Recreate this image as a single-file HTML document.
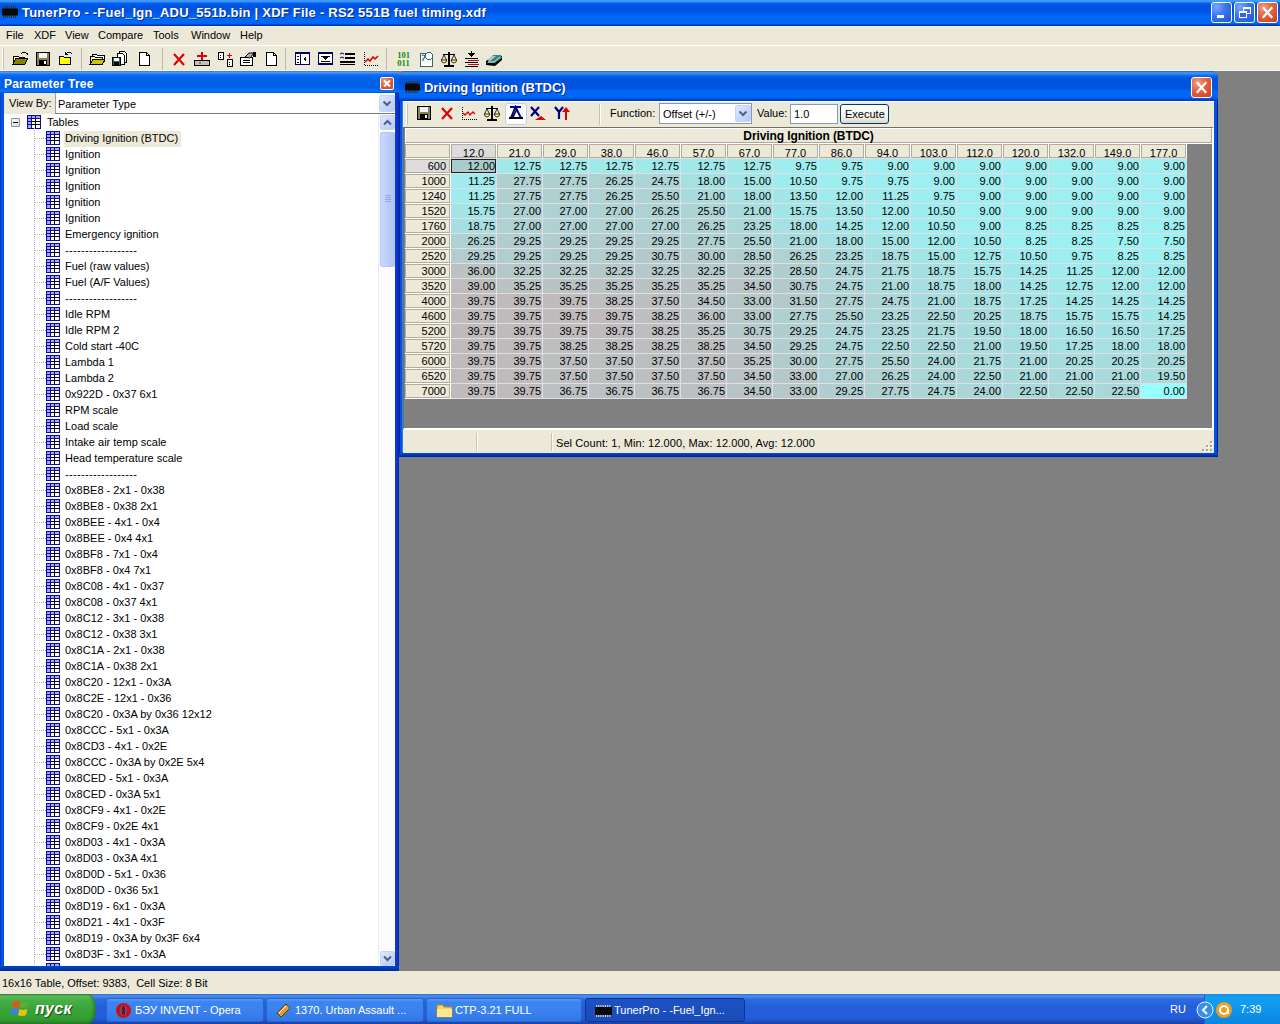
<!DOCTYPE html>
<html><head><meta charset="utf-8">
<style>
*{margin:0;padding:0;box-sizing:border-box}
html,body{width:1280px;height:1024px;overflow:hidden;background:#808080;font-family:"Liberation Sans",sans-serif;font-size:11px;color:#000}
.a{position:absolute}
#title{left:0;top:0;width:1280px;height:26px;background:linear-gradient(#3c9cff 0px,#3a96ff 1.5px,#0a62e8 3px,#0054e3 5px,#0054e3 12px,#005cef 14px,#0068f8 17px,#0066f8 24px,#0034b4 25px,#0030b0 26px)}
#title .t{left:22px;top:5px;color:#fff;font-weight:bold;font-size:13px;letter-spacing:0.22px;white-space:nowrap;text-shadow:1px 1px 0 #0a2a8a}
.chip{background:#111}
.btn{border:1px solid #fff;border-radius:3px}
#menubar{left:0;top:26px;width:1280px;height:19px;background:linear-gradient(#f0f0f8 0px,#ece9d8 2px)}
#menubar span{position:absolute;top:3px}
#toolbar{left:0;top:45px;width:1280px;height:26px;background:#ece9d8;border-top:1px solid #fff}
.grip{width:2px;background:#c5c2b2;border-left:1px solid #fff}
.sep{width:2px;border-left:1px solid #c5c2b2;border-right:1px solid #fff}
#tree{left:0;top:71px;width:399px;height:900px;background:#0054e3}
#statusbar{left:0;top:971px;width:1280px;height:23px;background:#ece9d8}
#taskbar{left:0;top:994px;width:1280px;height:30px;background:linear-gradient(#3168d5 0px,#4993e6 2px,#2e6de0 5px,#245edb 12px,#245edb 24px,#1941a5 30px)}
.tbtn{top:4px;height:23px;border-radius:3px;background:#3c81f3;color:#fff;border:1px solid #1b50c8}
.tree .it{position:absolute;left:65px;height:16px;white-space:nowrap}
.cell{position:absolute;height:13px;text-align:right;padding-right:2px;line-height:14px;font-size:11px}
</style></head><body>
<div id="title" class="a"><svg class="a" style="left:2px;top:6px" width="16" height="12" viewBox="0 0 16 12"><rect x="1.00" y="0" width="1.10" height="3" fill="#333"/><rect x="1.00" y="9" width="1.10" height="3" fill="#333"/><rect x="3.00" y="0" width="1.10" height="3" fill="#333"/><rect x="3.00" y="9" width="1.10" height="3" fill="#333"/><rect x="5.00" y="0" width="1.10" height="3" fill="#333"/><rect x="5.00" y="9" width="1.10" height="3" fill="#333"/><rect x="7.00" y="0" width="1.10" height="3" fill="#333"/><rect x="7.00" y="9" width="1.10" height="3" fill="#333"/><rect x="9.00" y="0" width="1.10" height="3" fill="#333"/><rect x="9.00" y="9" width="1.10" height="3" fill="#333"/><rect x="11.00" y="0" width="1.10" height="3" fill="#333"/><rect x="11.00" y="9" width="1.10" height="3" fill="#333"/><rect x="13.00" y="0" width="1.10" height="3" fill="#333"/><rect x="13.00" y="9" width="1.10" height="3" fill="#333"/><rect x="0" y="2.5" width="16" height="7" fill="#0a0a0a"/></svg><div class="a t">TunerPro - -Fuel_Ign_ADU_551b.bin | XDF File - RS2 551B fuel timing.xdf</div><div class="a" style="left:1211px;top:2px;width:21px;height:21px;border:1px solid #fff;border-radius:3px;background:radial-gradient(circle at 25% 20%, #7aa8ff 0%, #3d78ee 40%, #2a62e0 75%, #1f52cc 100%)"><div class="a" style="left:5px;top:12px;width:7px;height:3px;background:#fff"></div></div><div class="a" style="left:1234px;top:2px;width:21px;height:21px;border:1px solid #fff;border-radius:3px;background:radial-gradient(circle at 25% 20%, #7aa8ff 0%, #3d78ee 40%, #2a62e0 75%, #1f52cc 100%)"><div class="a" style="left:8px;top:4px;width:8px;height:7px;border:1px solid #fff;border-top-width:2px"></div><div class="a" style="left:4px;top:8px;width:8px;height:7px;border:1px solid #fff;border-top-width:2px;background:#3368e4"></div></div><div class="a" style="left:1257px;top:2px;width:21px;height:21px;border:1px solid #fff;border-radius:3px;background:radial-gradient(circle at 30% 25%, #f4a08a 0%, #e46b4c 35%, #d9502c 70%, #c4401e 100%)"><svg class="a" style="left:0;top:0" width="19" height="19" viewBox="0 0 19 19"><path d="M5.5 5 L13.5 14 M13.5 5 L5.5 14" stroke="#fff" stroke-width="2.2" stroke-linecap="square"/></svg></div></div><div id="menubar" class="a"><span style="left:6px">File</span><span style="left:34px">XDF</span><span style="left:65px">View</span><span style="left:98px">Compare</span><span style="left:153px">Tools</span><span style="left:191px">Window</span><span style="left:240px">Help</span></div><div id="toolbar" class="a"><div class="a grip" style="left:2px;top:2px;height:22px"></div><div class="a" style="left:81px;top:2px;width:1px;height:22px;background:#bcb9aa"></div><div class="a" style="left:162px;top:2px;width:1px;height:22px;background:#bcb9aa"></div><div class="a" style="left:285px;top:2px;width:1px;height:22px;background:#bcb9aa"></div><div class="a" style="left:386px;top:2px;width:1px;height:22px;background:#bcb9aa"></div><div class="a" style="left:0;top:24px;width:1280px;height:1px;background:#f4f6fa"></div></div><svg class="a" style="left:12px;top:51px" width="16" height="16" viewBox="0 0 16 16" shape-rendering="crispEdges"><path d="M1 5h5l1 1h5v7H1z" fill="#ffff9c" stroke="#000"/><path d="M1 13l3-6h12l-3 6z" fill="#848400" stroke="#000"/><path d="M9 3q3-3 6 0" fill="none" stroke="#000"/><path d="M13 2h3v3z" fill="#000"/></svg><svg class="a" style="left:35px;top:51px" width="16" height="16" viewBox="0 0 16 16" shape-rendering="crispEdges"><rect x="1.5" y="1.5" width="13" height="13" fill="#848453" stroke="#000"/><rect x="4" y="2" width="8" height="5" fill="#f4f4f4"/><rect x="4" y="9" width="8" height="5" fill="#000"/><rect x="9" y="10" width="2" height="3" fill="#fff"/></svg><svg class="a" style="left:58px;top:50px" width="16" height="16" viewBox="0 0 16 16" shape-rendering="crispEdges"><path d="M1.5 6.5h4l1 1h6v7h-11z" fill="#ffff00" stroke="#000"/><path d="M8 4q3-4 6 0" fill="none" stroke="#000"/><path d="M7 2v3h3z" fill="#000"/></svg><svg class="a" style="left:89px;top:51px" width="16" height="16" viewBox="0 0 16 16" shape-rendering="crispEdges"><path d="M3.5 3.5h4l1 1h7v6h-12z" fill="#fff" stroke="#000"/><path d="M1.5 5.5h4l1 1h7v7h-12z" fill="#ffff9c" stroke="#000"/><path d="M1 13.5l3-5h12l-3 5z" fill="#c8c800" stroke="#000"/></svg><svg class="a" style="left:112px;top:50px" width="16" height="16" viewBox="0 0 16 16" shape-rendering="crispEdges"><path d="M7.5 1.5h5l2 2v9h-7z" fill="#fff" stroke="#000"/><path d="M5.5 3.5h5l2 2v9h-7z" fill="#fff" stroke="#000"/><rect x="0.5" y="7.5" width="8" height="8" fill="#2d6b6b" stroke="#000"/><rect x="2" y="8" width="5" height="3" fill="#fff"/><rect x="2" y="12" width="5" height="3" fill="#000"/></svg><svg class="a" style="left:137px;top:51px" width="16" height="16" viewBox="0 0 16 16" shape-rendering="crispEdges"><path d="M2.5 1.5h7l3 3v10h-10z" fill="#fff" stroke="#000"/><path d="M9.5 1.5v3h3" fill="none" stroke="#000"/></svg><svg class="a" style="left:172px;top:52px" width="16" height="16" viewBox="0 0 16 16" shape-rendering="crispEdges"><path d="M2 2L12 13M12 2L2 13" stroke="#e00000" stroke-width="2.2" fill="none" shape-rendering="auto"/></svg><svg class="a" style="left:194px;top:51px" width="16" height="16" viewBox="0 0 16 16" shape-rendering="crispEdges"><rect x="0.5" y="9.5" width="15" height="5" fill="#c0c0c0" stroke="#000"/><rect x="5" y="11" width="2" height="2" fill="#808080"/><rect x="7" y="1" width="2" height="8" fill="#e00000"/><rect x="3" y="4" width="10" height="2" fill="#e00000"/></svg><svg class="a" style="left:218px;top:52px" width="16" height="16" viewBox="0 0 16 16" shape-rendering="crispEdges"><rect x="0.5" y="0.5" width="5" height="7" fill="#fff" stroke="#000"/><rect x="2" y="3" width="1" height="1" fill="#000"/><rect x="2" y="5" width="1" height="1" fill="#000"/><rect x="9.5" y="7.5" width="5" height="7" fill="#fff" stroke="#000"/><rect x="11" y="10" width="1" height="1" fill="#000"/><rect x="11" y="12" width="1" height="1" fill="#000"/><rect x="11" y="1" width="1" height="5" fill="#e00000"/><rect x="9" y="3" width="5" height="1" fill="#e00000"/></svg><svg class="a" style="left:240px;top:51px" width="16" height="16" viewBox="0 0 16 16" shape-rendering="crispEdges"><rect x="0.5" y="6.5" width="12" height="8" fill="#fff" stroke="#000"/><rect x="3" y="9" width="7" height="1" fill="#000"/><rect x="3" y="11" width="7" height="1" fill="#000"/><path d="M5 6l4-4h5l-4 5z" fill="#b0b0b0" stroke="#000" shape-rendering="auto"/><rect x="13" y="1" width="3" height="5" fill="#000"/></svg><svg class="a" style="left:265px;top:51px" width="16" height="16" viewBox="0 0 16 16" shape-rendering="crispEdges"><path d="M1.5 1.5h7l3 3v10h-10z" fill="#fff" stroke="#000"/><path d="M8.5 1.5v3h3" fill="none" stroke="#000"/></svg><svg class="a" style="left:295px;top:52px" width="16" height="16" viewBox="0 0 16 16" shape-rendering="crispEdges"><rect x="0.5" y="0.5" width="14" height="12" fill="#fff" stroke="#000060" stroke-width="1"/><rect x="0" y="0" width="15" height="2" fill="#000060"/><rect x="5" y="2" width="1" height="10" fill="#000060"/><path d="M8 7l3-3v6z" fill="#000"/><rect x="2" y="4" width="2" height="1" fill="#000"/><rect x="2" y="7" width="2" height="1" fill="#000"/><rect x="2" y="10" width="2" height="1" fill="#000"/></svg><svg class="a" style="left:318px;top:52px" width="16" height="16" viewBox="0 0 16 16" shape-rendering="crispEdges"><rect x="0.5" y="0.5" width="14" height="12" fill="#fff" stroke="#000060"/><rect x="0" y="0" width="15" height="2" fill="#000060"/><rect x="3" y="4" width="9" height="1" fill="#000"/><path d="M4 5h7l-3.5 3z" fill="#000"/><rect x="3" y="9" width="9" height="1" fill="#000"/><rect x="0" y="11" width="15" height="2" fill="#000060"/></svg><svg class="a" style="left:340px;top:52px" width="16" height="16" viewBox="0 0 16 16" shape-rendering="crispEdges"><rect x="5" y="1" width="10" height="2" fill="#000"/><rect x="5" y="5" width="10" height="2" fill="#000"/><rect x="0" y="9" width="15" height="2" fill="#000"/><rect x="0" y="12" width="15" height="1" fill="#000"/><path d="M0 2l2-1 2 1M0 6l2-1 2 1" stroke="#000060" fill="none" shape-rendering="auto"/></svg><svg class="a" style="left:363px;top:51px" width="16" height="16" viewBox="0 0 16 16" shape-rendering="crispEdges"><path d="M1 1v13h15" stroke="#000" stroke-dasharray="1 1" fill="none"/><path d="M2 11l3-3 2 2 3-4 2 2 3-3" stroke="#e00000" stroke-width="1.5" fill="none" shape-rendering="auto"/></svg><svg class="a" style="left:396px;top:51px" width="16" height="16" viewBox="0 0 16 16" shape-rendering="crispEdges"><text x="7.5" y="7" font-family="Liberation Serif" font-size="8.5" font-weight="bold" fill="#108a10" text-anchor="middle">101</text><text x="7.5" y="15" font-family="Liberation Serif" font-size="8.5" font-weight="bold" fill="#108a10" text-anchor="middle">011</text></svg><svg class="a" style="left:419px;top:51px" width="16" height="16" viewBox="0 0 16 16" shape-rendering="crispEdges"><path d="M1.5 2.5h9l3 3v10h-12z" fill="#fff" stroke="#2d6b6b"/><circle cx="10" cy="5" r="3.5" fill="#fff" stroke="#2d6b6b"/><path d="M3 5q1-2 3 0q0 2-2 3v2" stroke="#2d6b6b" stroke-width="1.2" fill="none" shape-rendering="auto"/></svg><svg class="a" style="left:441px;top:51px" width="16" height="16" viewBox="0 0 16 16" shape-rendering="crispEdges"><rect x="7" y="1" width="2" height="13" fill="#000"/><rect x="3" y="14" width="10" height="2" fill="#000"/><rect x="2" y="3" width="12" height="1" fill="#000"/><path d="M3 4l-2.5 5M3 4l2.5 5M13 4l-2.5 5M13 4l2.5 5" stroke="#000" stroke-width="0.8" shape-rendering="auto"/><path d="M0 9h6q-1 3-3 3t-3-3z" fill="#ffff60" stroke="#000" stroke-width="0.8" shape-rendering="auto"/><path d="M10 9h6q-1 3-3 3t-3-3z" fill="#ffff60" stroke="#000" stroke-width="0.8" shape-rendering="auto"/></svg><svg class="a" style="left:464px;top:51px" width="16" height="16" viewBox="0 0 16 16" shape-rendering="crispEdges"><rect x="7" y="0" width="1" height="4" fill="#000"/><path d="M4 2h7l-3.5 4z" fill="#000"/><rect x="1" y="7" width="13" height="1" fill="#000"/><rect x="4" y="9" width="11" height="1" fill="#d00000"/><rect x="1" y="11" width="13" height="1" fill="#000"/><rect x="4" y="13" width="11" height="1" fill="#d00000"/><rect x="1" y="15" width="13" height="1" fill="#000"/></svg><svg class="a" style="left:486px;top:51px" width="16" height="16" viewBox="0 0 16 16" shape-rendering="crispEdges"><path d="M0 10l7-5 9 0 0 4-7 6-9-1z" fill="#000" shape-rendering="auto"/><path d="M7 4h8l1 3-7 5H1z" fill="#2e8a7a" shape-rendering="auto"/><path d="M1 9l6-4h3l-6 5z" fill="#c8c8c8" shape-rendering="auto"/><path d="M2 11h6l6-5" stroke="#fff" stroke-width="0.8" fill="none" shape-rendering="auto"/></svg><div id="tree" class="a"><div class="a" style="left:0;top:0;width:399px;height:22px;background:linear-gradient(#2a5cb0 0px,#60a8ff 1px,#3a8cf8 2px,#0a6af0 4px,#0060e8 8px,#0060e8 17px,#0870ff 19px,#0870ff 20.5px,#0050c8 22px)"></div><div class="a" style="left:4px;top:6px;color:#fff;font-weight:bold;font-size:12px;letter-spacing:0.2px">Parameter Tree</div><div class="a" style="left:380px;top:6px;width:14px;height:13px;border:1px solid #fff;border-radius:2px;background:radial-gradient(circle at 30% 25%,#f09a80 0%,#e0603e 45%,#c8461f 100%)"><svg class="a" style="left:0;top:0" width="12" height="11" viewBox="0 0 12 11"><path d="M3 2.5 L9 8.5 M9 2.5 L3 8.5" stroke="#fff" stroke-width="2"/></svg></div><div class="a" style="left:0;top:22px;width:1px;height:878px;background:#0a3cc0"></div><div class="a" style="left:395px;top:22px;width:4px;height:878px;background:linear-gradient(90deg,#0a3ad0,#0838d8 50%,#0028a8)"></div><div class="a" style="left:0;top:895px;width:399px;height:5px;background:linear-gradient(#0048d0,#002c98)"></div><div class="a" style="left:4px;top:22px;width:391px;height:21px;background:#ece9d8"></div><div class="a" style="left:9px;top:26px">View By:</div><div class="a" style="left:55px;top:22px;width:340px;height:21px;background:#fff;border-left:1px solid #a0a0a0;border-bottom:1px solid #7a7a7a"></div><div class="a" style="left:58px;top:27px">Parameter Type</div><div class="a" style="left:379px;top:24px;width:16px;height:17px;border-radius:2px;border:1px solid #c3d3fd;background:linear-gradient(135deg,#dfe8fd,#c6d5fb 60%,#b7c9f7)"><svg class="a" style="left:-1px;top:-1px" width="16" height="17" viewBox="0 0 16 17"><path d="M4.5 6.5 L8.0 10.0 L11.5 6.5" stroke="#4d6185" stroke-width="2" fill="none"/></svg></div><div class="a" style="left:4px;top:43px;width:374px;height:852px;background:#fff;overflow:hidden"><div class="a" style="left:7px;top:4px;width:9px;height:9px;border:1px solid #919191;border-radius:1px;background:linear-gradient(135deg,#fff,#d8d8d0)"><div class="a" style="left:1px;top:3px;width:5px;height:1px;background:#000"></div></div><svg class="a" style="left:23px;top:1px" width="14" height="14" viewBox="0 0 14 14" shape-rendering="crispEdges"><rect x="0" y="0" width="14" height="14" fill="#0c0c9c"/><rect x="1" y="1" width="12" height="12" fill="#000"/><rect x="1" y="1" width="3" height="2" fill="#a4a8f4"/><rect x="1" y="4" width="3" height="2" fill="#a4a8f4"/><rect x="1" y="7" width="3" height="2" fill="#a4a8f4"/><rect x="1" y="10" width="3" height="3" fill="#a4a8f4"/><rect x="5" y="1" width="3" height="2" fill="#a4a8f4"/><rect x="5" y="4" width="3" height="2" fill="#fff"/><rect x="5" y="7" width="3" height="2" fill="#fff"/><rect x="5" y="10" width="3" height="3" fill="#fff"/><rect x="9" y="1" width="4" height="2" fill="#a4a8f4"/><rect x="9" y="4" width="4" height="2" fill="#fff"/><rect x="9" y="7" width="4" height="2" fill="#fff"/><rect x="9" y="10" width="4" height="3" fill="#fff"/><rect x="1" y="3" width="12" height="1" fill="#0c0c9c"/><rect x="4" y="1" width="1" height="12" fill="#0c0c9c"/><rect x="8" y="4" width="1" height="9" fill="#000"/><rect x="5" y="6" width="8" height="1" fill="#000"/><rect x="5" y="9" width="8" height="1" fill="#000"/><rect x="1" y="6" width="3" height="1" fill="#0c0c9c"/><rect x="1" y="9" width="3" height="1" fill="#0c0c9c"/><rect x="8" y="1" width="1" height="2" fill="#0c0c9c"/></svg><div class="a" style="left:43px;top:2px">Tables</div><div class="a" style="left:30px;top:14px;width:1px;height:860px;background:repeating-linear-gradient(#b0b0a8 0 1px,transparent 1px 2px)"></div><div class="a" style="left:31px;top:24px;width:11px;height:1px;background:repeating-linear-gradient(90deg,#b0b0a8 0 1px,transparent 1px 2px)"></div><svg class="a" style="left:42px;top:17px" width="14" height="14" viewBox="0 0 14 14" shape-rendering="crispEdges"><rect x="0" y="0" width="14" height="14" fill="#0c0c9c"/><rect x="1" y="1" width="12" height="12" fill="#000"/><rect x="1" y="1" width="3" height="2" fill="#a4a8f4"/><rect x="1" y="4" width="3" height="2" fill="#a4a8f4"/><rect x="1" y="7" width="3" height="2" fill="#a4a8f4"/><rect x="1" y="10" width="3" height="3" fill="#a4a8f4"/><rect x="5" y="1" width="3" height="2" fill="#a4a8f4"/><rect x="5" y="4" width="3" height="2" fill="#fff"/><rect x="5" y="7" width="3" height="2" fill="#fff"/><rect x="5" y="10" width="3" height="3" fill="#fff"/><rect x="9" y="1" width="4" height="2" fill="#a4a8f4"/><rect x="9" y="4" width="4" height="2" fill="#fff"/><rect x="9" y="7" width="4" height="2" fill="#fff"/><rect x="9" y="10" width="4" height="3" fill="#fff"/><rect x="1" y="3" width="12" height="1" fill="#0c0c9c"/><rect x="4" y="1" width="1" height="12" fill="#0c0c9c"/><rect x="8" y="4" width="1" height="9" fill="#000"/><rect x="5" y="6" width="8" height="1" fill="#000"/><rect x="5" y="9" width="8" height="1" fill="#000"/><rect x="1" y="6" width="3" height="1" fill="#0c0c9c"/><rect x="1" y="9" width="3" height="1" fill="#0c0c9c"/><rect x="8" y="1" width="1" height="2" fill="#0c0c9c"/></svg><div class="a" style="left:60px;top:17px;width:117px;height:16px;background:#ece9d8"></div><div class="a" style="left:61px;top:18px;white-space:nowrap">Driving Ignition (BTDC)</div><div class="a" style="left:31px;top:40px;width:11px;height:1px;background:repeating-linear-gradient(90deg,#b0b0a8 0 1px,transparent 1px 2px)"></div><svg class="a" style="left:42px;top:33px" width="14" height="14" viewBox="0 0 14 14" shape-rendering="crispEdges"><rect x="0" y="0" width="14" height="14" fill="#0c0c9c"/><rect x="1" y="1" width="12" height="12" fill="#000"/><rect x="1" y="1" width="3" height="2" fill="#a4a8f4"/><rect x="1" y="4" width="3" height="2" fill="#a4a8f4"/><rect x="1" y="7" width="3" height="2" fill="#a4a8f4"/><rect x="1" y="10" width="3" height="3" fill="#a4a8f4"/><rect x="5" y="1" width="3" height="2" fill="#a4a8f4"/><rect x="5" y="4" width="3" height="2" fill="#fff"/><rect x="5" y="7" width="3" height="2" fill="#fff"/><rect x="5" y="10" width="3" height="3" fill="#fff"/><rect x="9" y="1" width="4" height="2" fill="#a4a8f4"/><rect x="9" y="4" width="4" height="2" fill="#fff"/><rect x="9" y="7" width="4" height="2" fill="#fff"/><rect x="9" y="10" width="4" height="3" fill="#fff"/><rect x="1" y="3" width="12" height="1" fill="#0c0c9c"/><rect x="4" y="1" width="1" height="12" fill="#0c0c9c"/><rect x="8" y="4" width="1" height="9" fill="#000"/><rect x="5" y="6" width="8" height="1" fill="#000"/><rect x="5" y="9" width="8" height="1" fill="#000"/><rect x="1" y="6" width="3" height="1" fill="#0c0c9c"/><rect x="1" y="9" width="3" height="1" fill="#0c0c9c"/><rect x="8" y="1" width="1" height="2" fill="#0c0c9c"/></svg><div class="a" style="left:61px;top:34px;white-space:nowrap">Ignition</div><div class="a" style="left:31px;top:56px;width:11px;height:1px;background:repeating-linear-gradient(90deg,#b0b0a8 0 1px,transparent 1px 2px)"></div><svg class="a" style="left:42px;top:49px" width="14" height="14" viewBox="0 0 14 14" shape-rendering="crispEdges"><rect x="0" y="0" width="14" height="14" fill="#0c0c9c"/><rect x="1" y="1" width="12" height="12" fill="#000"/><rect x="1" y="1" width="3" height="2" fill="#a4a8f4"/><rect x="1" y="4" width="3" height="2" fill="#a4a8f4"/><rect x="1" y="7" width="3" height="2" fill="#a4a8f4"/><rect x="1" y="10" width="3" height="3" fill="#a4a8f4"/><rect x="5" y="1" width="3" height="2" fill="#a4a8f4"/><rect x="5" y="4" width="3" height="2" fill="#fff"/><rect x="5" y="7" width="3" height="2" fill="#fff"/><rect x="5" y="10" width="3" height="3" fill="#fff"/><rect x="9" y="1" width="4" height="2" fill="#a4a8f4"/><rect x="9" y="4" width="4" height="2" fill="#fff"/><rect x="9" y="7" width="4" height="2" fill="#fff"/><rect x="9" y="10" width="4" height="3" fill="#fff"/><rect x="1" y="3" width="12" height="1" fill="#0c0c9c"/><rect x="4" y="1" width="1" height="12" fill="#0c0c9c"/><rect x="8" y="4" width="1" height="9" fill="#000"/><rect x="5" y="6" width="8" height="1" fill="#000"/><rect x="5" y="9" width="8" height="1" fill="#000"/><rect x="1" y="6" width="3" height="1" fill="#0c0c9c"/><rect x="1" y="9" width="3" height="1" fill="#0c0c9c"/><rect x="8" y="1" width="1" height="2" fill="#0c0c9c"/></svg><div class="a" style="left:61px;top:50px;white-space:nowrap">Ignition</div><div class="a" style="left:31px;top:72px;width:11px;height:1px;background:repeating-linear-gradient(90deg,#b0b0a8 0 1px,transparent 1px 2px)"></div><svg class="a" style="left:42px;top:65px" width="14" height="14" viewBox="0 0 14 14" shape-rendering="crispEdges"><rect x="0" y="0" width="14" height="14" fill="#0c0c9c"/><rect x="1" y="1" width="12" height="12" fill="#000"/><rect x="1" y="1" width="3" height="2" fill="#a4a8f4"/><rect x="1" y="4" width="3" height="2" fill="#a4a8f4"/><rect x="1" y="7" width="3" height="2" fill="#a4a8f4"/><rect x="1" y="10" width="3" height="3" fill="#a4a8f4"/><rect x="5" y="1" width="3" height="2" fill="#a4a8f4"/><rect x="5" y="4" width="3" height="2" fill="#fff"/><rect x="5" y="7" width="3" height="2" fill="#fff"/><rect x="5" y="10" width="3" height="3" fill="#fff"/><rect x="9" y="1" width="4" height="2" fill="#a4a8f4"/><rect x="9" y="4" width="4" height="2" fill="#fff"/><rect x="9" y="7" width="4" height="2" fill="#fff"/><rect x="9" y="10" width="4" height="3" fill="#fff"/><rect x="1" y="3" width="12" height="1" fill="#0c0c9c"/><rect x="4" y="1" width="1" height="12" fill="#0c0c9c"/><rect x="8" y="4" width="1" height="9" fill="#000"/><rect x="5" y="6" width="8" height="1" fill="#000"/><rect x="5" y="9" width="8" height="1" fill="#000"/><rect x="1" y="6" width="3" height="1" fill="#0c0c9c"/><rect x="1" y="9" width="3" height="1" fill="#0c0c9c"/><rect x="8" y="1" width="1" height="2" fill="#0c0c9c"/></svg><div class="a" style="left:61px;top:66px;white-space:nowrap">Ignition</div><div class="a" style="left:31px;top:88px;width:11px;height:1px;background:repeating-linear-gradient(90deg,#b0b0a8 0 1px,transparent 1px 2px)"></div><svg class="a" style="left:42px;top:81px" width="14" height="14" viewBox="0 0 14 14" shape-rendering="crispEdges"><rect x="0" y="0" width="14" height="14" fill="#0c0c9c"/><rect x="1" y="1" width="12" height="12" fill="#000"/><rect x="1" y="1" width="3" height="2" fill="#a4a8f4"/><rect x="1" y="4" width="3" height="2" fill="#a4a8f4"/><rect x="1" y="7" width="3" height="2" fill="#a4a8f4"/><rect x="1" y="10" width="3" height="3" fill="#a4a8f4"/><rect x="5" y="1" width="3" height="2" fill="#a4a8f4"/><rect x="5" y="4" width="3" height="2" fill="#fff"/><rect x="5" y="7" width="3" height="2" fill="#fff"/><rect x="5" y="10" width="3" height="3" fill="#fff"/><rect x="9" y="1" width="4" height="2" fill="#a4a8f4"/><rect x="9" y="4" width="4" height="2" fill="#fff"/><rect x="9" y="7" width="4" height="2" fill="#fff"/><rect x="9" y="10" width="4" height="3" fill="#fff"/><rect x="1" y="3" width="12" height="1" fill="#0c0c9c"/><rect x="4" y="1" width="1" height="12" fill="#0c0c9c"/><rect x="8" y="4" width="1" height="9" fill="#000"/><rect x="5" y="6" width="8" height="1" fill="#000"/><rect x="5" y="9" width="8" height="1" fill="#000"/><rect x="1" y="6" width="3" height="1" fill="#0c0c9c"/><rect x="1" y="9" width="3" height="1" fill="#0c0c9c"/><rect x="8" y="1" width="1" height="2" fill="#0c0c9c"/></svg><div class="a" style="left:61px;top:82px;white-space:nowrap">Ignition</div><div class="a" style="left:31px;top:104px;width:11px;height:1px;background:repeating-linear-gradient(90deg,#b0b0a8 0 1px,transparent 1px 2px)"></div><svg class="a" style="left:42px;top:97px" width="14" height="14" viewBox="0 0 14 14" shape-rendering="crispEdges"><rect x="0" y="0" width="14" height="14" fill="#0c0c9c"/><rect x="1" y="1" width="12" height="12" fill="#000"/><rect x="1" y="1" width="3" height="2" fill="#a4a8f4"/><rect x="1" y="4" width="3" height="2" fill="#a4a8f4"/><rect x="1" y="7" width="3" height="2" fill="#a4a8f4"/><rect x="1" y="10" width="3" height="3" fill="#a4a8f4"/><rect x="5" y="1" width="3" height="2" fill="#a4a8f4"/><rect x="5" y="4" width="3" height="2" fill="#fff"/><rect x="5" y="7" width="3" height="2" fill="#fff"/><rect x="5" y="10" width="3" height="3" fill="#fff"/><rect x="9" y="1" width="4" height="2" fill="#a4a8f4"/><rect x="9" y="4" width="4" height="2" fill="#fff"/><rect x="9" y="7" width="4" height="2" fill="#fff"/><rect x="9" y="10" width="4" height="3" fill="#fff"/><rect x="1" y="3" width="12" height="1" fill="#0c0c9c"/><rect x="4" y="1" width="1" height="12" fill="#0c0c9c"/><rect x="8" y="4" width="1" height="9" fill="#000"/><rect x="5" y="6" width="8" height="1" fill="#000"/><rect x="5" y="9" width="8" height="1" fill="#000"/><rect x="1" y="6" width="3" height="1" fill="#0c0c9c"/><rect x="1" y="9" width="3" height="1" fill="#0c0c9c"/><rect x="8" y="1" width="1" height="2" fill="#0c0c9c"/></svg><div class="a" style="left:61px;top:98px;white-space:nowrap">Ignition</div><div class="a" style="left:31px;top:120px;width:11px;height:1px;background:repeating-linear-gradient(90deg,#b0b0a8 0 1px,transparent 1px 2px)"></div><svg class="a" style="left:42px;top:113px" width="14" height="14" viewBox="0 0 14 14" shape-rendering="crispEdges"><rect x="0" y="0" width="14" height="14" fill="#0c0c9c"/><rect x="1" y="1" width="12" height="12" fill="#000"/><rect x="1" y="1" width="3" height="2" fill="#a4a8f4"/><rect x="1" y="4" width="3" height="2" fill="#a4a8f4"/><rect x="1" y="7" width="3" height="2" fill="#a4a8f4"/><rect x="1" y="10" width="3" height="3" fill="#a4a8f4"/><rect x="5" y="1" width="3" height="2" fill="#a4a8f4"/><rect x="5" y="4" width="3" height="2" fill="#fff"/><rect x="5" y="7" width="3" height="2" fill="#fff"/><rect x="5" y="10" width="3" height="3" fill="#fff"/><rect x="9" y="1" width="4" height="2" fill="#a4a8f4"/><rect x="9" y="4" width="4" height="2" fill="#fff"/><rect x="9" y="7" width="4" height="2" fill="#fff"/><rect x="9" y="10" width="4" height="3" fill="#fff"/><rect x="1" y="3" width="12" height="1" fill="#0c0c9c"/><rect x="4" y="1" width="1" height="12" fill="#0c0c9c"/><rect x="8" y="4" width="1" height="9" fill="#000"/><rect x="5" y="6" width="8" height="1" fill="#000"/><rect x="5" y="9" width="8" height="1" fill="#000"/><rect x="1" y="6" width="3" height="1" fill="#0c0c9c"/><rect x="1" y="9" width="3" height="1" fill="#0c0c9c"/><rect x="8" y="1" width="1" height="2" fill="#0c0c9c"/></svg><div class="a" style="left:61px;top:114px;white-space:nowrap">Emergency ignition</div><div class="a" style="left:31px;top:136px;width:11px;height:1px;background:repeating-linear-gradient(90deg,#b0b0a8 0 1px,transparent 1px 2px)"></div><svg class="a" style="left:42px;top:129px" width="14" height="14" viewBox="0 0 14 14" shape-rendering="crispEdges"><rect x="0" y="0" width="14" height="14" fill="#0c0c9c"/><rect x="1" y="1" width="12" height="12" fill="#000"/><rect x="1" y="1" width="3" height="2" fill="#a4a8f4"/><rect x="1" y="4" width="3" height="2" fill="#a4a8f4"/><rect x="1" y="7" width="3" height="2" fill="#a4a8f4"/><rect x="1" y="10" width="3" height="3" fill="#a4a8f4"/><rect x="5" y="1" width="3" height="2" fill="#a4a8f4"/><rect x="5" y="4" width="3" height="2" fill="#fff"/><rect x="5" y="7" width="3" height="2" fill="#fff"/><rect x="5" y="10" width="3" height="3" fill="#fff"/><rect x="9" y="1" width="4" height="2" fill="#a4a8f4"/><rect x="9" y="4" width="4" height="2" fill="#fff"/><rect x="9" y="7" width="4" height="2" fill="#fff"/><rect x="9" y="10" width="4" height="3" fill="#fff"/><rect x="1" y="3" width="12" height="1" fill="#0c0c9c"/><rect x="4" y="1" width="1" height="12" fill="#0c0c9c"/><rect x="8" y="4" width="1" height="9" fill="#000"/><rect x="5" y="6" width="8" height="1" fill="#000"/><rect x="5" y="9" width="8" height="1" fill="#000"/><rect x="1" y="6" width="3" height="1" fill="#0c0c9c"/><rect x="1" y="9" width="3" height="1" fill="#0c0c9c"/><rect x="8" y="1" width="1" height="2" fill="#0c0c9c"/></svg><div class="a" style="left:61px;top:130px;white-space:nowrap;letter-spacing:0.35px">------------------</div><div class="a" style="left:31px;top:152px;width:11px;height:1px;background:repeating-linear-gradient(90deg,#b0b0a8 0 1px,transparent 1px 2px)"></div><svg class="a" style="left:42px;top:145px" width="14" height="14" viewBox="0 0 14 14" shape-rendering="crispEdges"><rect x="0" y="0" width="14" height="14" fill="#0c0c9c"/><rect x="1" y="1" width="12" height="12" fill="#000"/><rect x="1" y="1" width="3" height="2" fill="#a4a8f4"/><rect x="1" y="4" width="3" height="2" fill="#a4a8f4"/><rect x="1" y="7" width="3" height="2" fill="#a4a8f4"/><rect x="1" y="10" width="3" height="3" fill="#a4a8f4"/><rect x="5" y="1" width="3" height="2" fill="#a4a8f4"/><rect x="5" y="4" width="3" height="2" fill="#fff"/><rect x="5" y="7" width="3" height="2" fill="#fff"/><rect x="5" y="10" width="3" height="3" fill="#fff"/><rect x="9" y="1" width="4" height="2" fill="#a4a8f4"/><rect x="9" y="4" width="4" height="2" fill="#fff"/><rect x="9" y="7" width="4" height="2" fill="#fff"/><rect x="9" y="10" width="4" height="3" fill="#fff"/><rect x="1" y="3" width="12" height="1" fill="#0c0c9c"/><rect x="4" y="1" width="1" height="12" fill="#0c0c9c"/><rect x="8" y="4" width="1" height="9" fill="#000"/><rect x="5" y="6" width="8" height="1" fill="#000"/><rect x="5" y="9" width="8" height="1" fill="#000"/><rect x="1" y="6" width="3" height="1" fill="#0c0c9c"/><rect x="1" y="9" width="3" height="1" fill="#0c0c9c"/><rect x="8" y="1" width="1" height="2" fill="#0c0c9c"/></svg><div class="a" style="left:61px;top:146px;white-space:nowrap">Fuel (raw values)</div><div class="a" style="left:31px;top:168px;width:11px;height:1px;background:repeating-linear-gradient(90deg,#b0b0a8 0 1px,transparent 1px 2px)"></div><svg class="a" style="left:42px;top:161px" width="14" height="14" viewBox="0 0 14 14" shape-rendering="crispEdges"><rect x="0" y="0" width="14" height="14" fill="#0c0c9c"/><rect x="1" y="1" width="12" height="12" fill="#000"/><rect x="1" y="1" width="3" height="2" fill="#a4a8f4"/><rect x="1" y="4" width="3" height="2" fill="#a4a8f4"/><rect x="1" y="7" width="3" height="2" fill="#a4a8f4"/><rect x="1" y="10" width="3" height="3" fill="#a4a8f4"/><rect x="5" y="1" width="3" height="2" fill="#a4a8f4"/><rect x="5" y="4" width="3" height="2" fill="#fff"/><rect x="5" y="7" width="3" height="2" fill="#fff"/><rect x="5" y="10" width="3" height="3" fill="#fff"/><rect x="9" y="1" width="4" height="2" fill="#a4a8f4"/><rect x="9" y="4" width="4" height="2" fill="#fff"/><rect x="9" y="7" width="4" height="2" fill="#fff"/><rect x="9" y="10" width="4" height="3" fill="#fff"/><rect x="1" y="3" width="12" height="1" fill="#0c0c9c"/><rect x="4" y="1" width="1" height="12" fill="#0c0c9c"/><rect x="8" y="4" width="1" height="9" fill="#000"/><rect x="5" y="6" width="8" height="1" fill="#000"/><rect x="5" y="9" width="8" height="1" fill="#000"/><rect x="1" y="6" width="3" height="1" fill="#0c0c9c"/><rect x="1" y="9" width="3" height="1" fill="#0c0c9c"/><rect x="8" y="1" width="1" height="2" fill="#0c0c9c"/></svg><div class="a" style="left:61px;top:162px;white-space:nowrap">Fuel (A/F Values)</div><div class="a" style="left:31px;top:184px;width:11px;height:1px;background:repeating-linear-gradient(90deg,#b0b0a8 0 1px,transparent 1px 2px)"></div><svg class="a" style="left:42px;top:177px" width="14" height="14" viewBox="0 0 14 14" shape-rendering="crispEdges"><rect x="0" y="0" width="14" height="14" fill="#0c0c9c"/><rect x="1" y="1" width="12" height="12" fill="#000"/><rect x="1" y="1" width="3" height="2" fill="#a4a8f4"/><rect x="1" y="4" width="3" height="2" fill="#a4a8f4"/><rect x="1" y="7" width="3" height="2" fill="#a4a8f4"/><rect x="1" y="10" width="3" height="3" fill="#a4a8f4"/><rect x="5" y="1" width="3" height="2" fill="#a4a8f4"/><rect x="5" y="4" width="3" height="2" fill="#fff"/><rect x="5" y="7" width="3" height="2" fill="#fff"/><rect x="5" y="10" width="3" height="3" fill="#fff"/><rect x="9" y="1" width="4" height="2" fill="#a4a8f4"/><rect x="9" y="4" width="4" height="2" fill="#fff"/><rect x="9" y="7" width="4" height="2" fill="#fff"/><rect x="9" y="10" width="4" height="3" fill="#fff"/><rect x="1" y="3" width="12" height="1" fill="#0c0c9c"/><rect x="4" y="1" width="1" height="12" fill="#0c0c9c"/><rect x="8" y="4" width="1" height="9" fill="#000"/><rect x="5" y="6" width="8" height="1" fill="#000"/><rect x="5" y="9" width="8" height="1" fill="#000"/><rect x="1" y="6" width="3" height="1" fill="#0c0c9c"/><rect x="1" y="9" width="3" height="1" fill="#0c0c9c"/><rect x="8" y="1" width="1" height="2" fill="#0c0c9c"/></svg><div class="a" style="left:61px;top:178px;white-space:nowrap;letter-spacing:0.35px">------------------</div><div class="a" style="left:31px;top:200px;width:11px;height:1px;background:repeating-linear-gradient(90deg,#b0b0a8 0 1px,transparent 1px 2px)"></div><svg class="a" style="left:42px;top:193px" width="14" height="14" viewBox="0 0 14 14" shape-rendering="crispEdges"><rect x="0" y="0" width="14" height="14" fill="#0c0c9c"/><rect x="1" y="1" width="12" height="12" fill="#000"/><rect x="1" y="1" width="3" height="2" fill="#a4a8f4"/><rect x="1" y="4" width="3" height="2" fill="#a4a8f4"/><rect x="1" y="7" width="3" height="2" fill="#a4a8f4"/><rect x="1" y="10" width="3" height="3" fill="#a4a8f4"/><rect x="5" y="1" width="3" height="2" fill="#a4a8f4"/><rect x="5" y="4" width="3" height="2" fill="#fff"/><rect x="5" y="7" width="3" height="2" fill="#fff"/><rect x="5" y="10" width="3" height="3" fill="#fff"/><rect x="9" y="1" width="4" height="2" fill="#a4a8f4"/><rect x="9" y="4" width="4" height="2" fill="#fff"/><rect x="9" y="7" width="4" height="2" fill="#fff"/><rect x="9" y="10" width="4" height="3" fill="#fff"/><rect x="1" y="3" width="12" height="1" fill="#0c0c9c"/><rect x="4" y="1" width="1" height="12" fill="#0c0c9c"/><rect x="8" y="4" width="1" height="9" fill="#000"/><rect x="5" y="6" width="8" height="1" fill="#000"/><rect x="5" y="9" width="8" height="1" fill="#000"/><rect x="1" y="6" width="3" height="1" fill="#0c0c9c"/><rect x="1" y="9" width="3" height="1" fill="#0c0c9c"/><rect x="8" y="1" width="1" height="2" fill="#0c0c9c"/></svg><div class="a" style="left:61px;top:194px;white-space:nowrap">Idle RPM</div><div class="a" style="left:31px;top:216px;width:11px;height:1px;background:repeating-linear-gradient(90deg,#b0b0a8 0 1px,transparent 1px 2px)"></div><svg class="a" style="left:42px;top:209px" width="14" height="14" viewBox="0 0 14 14" shape-rendering="crispEdges"><rect x="0" y="0" width="14" height="14" fill="#0c0c9c"/><rect x="1" y="1" width="12" height="12" fill="#000"/><rect x="1" y="1" width="3" height="2" fill="#a4a8f4"/><rect x="1" y="4" width="3" height="2" fill="#a4a8f4"/><rect x="1" y="7" width="3" height="2" fill="#a4a8f4"/><rect x="1" y="10" width="3" height="3" fill="#a4a8f4"/><rect x="5" y="1" width="3" height="2" fill="#a4a8f4"/><rect x="5" y="4" width="3" height="2" fill="#fff"/><rect x="5" y="7" width="3" height="2" fill="#fff"/><rect x="5" y="10" width="3" height="3" fill="#fff"/><rect x="9" y="1" width="4" height="2" fill="#a4a8f4"/><rect x="9" y="4" width="4" height="2" fill="#fff"/><rect x="9" y="7" width="4" height="2" fill="#fff"/><rect x="9" y="10" width="4" height="3" fill="#fff"/><rect x="1" y="3" width="12" height="1" fill="#0c0c9c"/><rect x="4" y="1" width="1" height="12" fill="#0c0c9c"/><rect x="8" y="4" width="1" height="9" fill="#000"/><rect x="5" y="6" width="8" height="1" fill="#000"/><rect x="5" y="9" width="8" height="1" fill="#000"/><rect x="1" y="6" width="3" height="1" fill="#0c0c9c"/><rect x="1" y="9" width="3" height="1" fill="#0c0c9c"/><rect x="8" y="1" width="1" height="2" fill="#0c0c9c"/></svg><div class="a" style="left:61px;top:210px;white-space:nowrap">Idle RPM 2</div><div class="a" style="left:31px;top:232px;width:11px;height:1px;background:repeating-linear-gradient(90deg,#b0b0a8 0 1px,transparent 1px 2px)"></div><svg class="a" style="left:42px;top:225px" width="14" height="14" viewBox="0 0 14 14" shape-rendering="crispEdges"><rect x="0" y="0" width="14" height="14" fill="#0c0c9c"/><rect x="1" y="1" width="12" height="12" fill="#000"/><rect x="1" y="1" width="3" height="2" fill="#a4a8f4"/><rect x="1" y="4" width="3" height="2" fill="#a4a8f4"/><rect x="1" y="7" width="3" height="2" fill="#a4a8f4"/><rect x="1" y="10" width="3" height="3" fill="#a4a8f4"/><rect x="5" y="1" width="3" height="2" fill="#a4a8f4"/><rect x="5" y="4" width="3" height="2" fill="#fff"/><rect x="5" y="7" width="3" height="2" fill="#fff"/><rect x="5" y="10" width="3" height="3" fill="#fff"/><rect x="9" y="1" width="4" height="2" fill="#a4a8f4"/><rect x="9" y="4" width="4" height="2" fill="#fff"/><rect x="9" y="7" width="4" height="2" fill="#fff"/><rect x="9" y="10" width="4" height="3" fill="#fff"/><rect x="1" y="3" width="12" height="1" fill="#0c0c9c"/><rect x="4" y="1" width="1" height="12" fill="#0c0c9c"/><rect x="8" y="4" width="1" height="9" fill="#000"/><rect x="5" y="6" width="8" height="1" fill="#000"/><rect x="5" y="9" width="8" height="1" fill="#000"/><rect x="1" y="6" width="3" height="1" fill="#0c0c9c"/><rect x="1" y="9" width="3" height="1" fill="#0c0c9c"/><rect x="8" y="1" width="1" height="2" fill="#0c0c9c"/></svg><div class="a" style="left:61px;top:226px;white-space:nowrap">Cold start -40C</div><div class="a" style="left:31px;top:248px;width:11px;height:1px;background:repeating-linear-gradient(90deg,#b0b0a8 0 1px,transparent 1px 2px)"></div><svg class="a" style="left:42px;top:241px" width="14" height="14" viewBox="0 0 14 14" shape-rendering="crispEdges"><rect x="0" y="0" width="14" height="14" fill="#0c0c9c"/><rect x="1" y="1" width="12" height="12" fill="#000"/><rect x="1" y="1" width="3" height="2" fill="#a4a8f4"/><rect x="1" y="4" width="3" height="2" fill="#a4a8f4"/><rect x="1" y="7" width="3" height="2" fill="#a4a8f4"/><rect x="1" y="10" width="3" height="3" fill="#a4a8f4"/><rect x="5" y="1" width="3" height="2" fill="#a4a8f4"/><rect x="5" y="4" width="3" height="2" fill="#fff"/><rect x="5" y="7" width="3" height="2" fill="#fff"/><rect x="5" y="10" width="3" height="3" fill="#fff"/><rect x="9" y="1" width="4" height="2" fill="#a4a8f4"/><rect x="9" y="4" width="4" height="2" fill="#fff"/><rect x="9" y="7" width="4" height="2" fill="#fff"/><rect x="9" y="10" width="4" height="3" fill="#fff"/><rect x="1" y="3" width="12" height="1" fill="#0c0c9c"/><rect x="4" y="1" width="1" height="12" fill="#0c0c9c"/><rect x="8" y="4" width="1" height="9" fill="#000"/><rect x="5" y="6" width="8" height="1" fill="#000"/><rect x="5" y="9" width="8" height="1" fill="#000"/><rect x="1" y="6" width="3" height="1" fill="#0c0c9c"/><rect x="1" y="9" width="3" height="1" fill="#0c0c9c"/><rect x="8" y="1" width="1" height="2" fill="#0c0c9c"/></svg><div class="a" style="left:61px;top:242px;white-space:nowrap">Lambda 1</div><div class="a" style="left:31px;top:264px;width:11px;height:1px;background:repeating-linear-gradient(90deg,#b0b0a8 0 1px,transparent 1px 2px)"></div><svg class="a" style="left:42px;top:257px" width="14" height="14" viewBox="0 0 14 14" shape-rendering="crispEdges"><rect x="0" y="0" width="14" height="14" fill="#0c0c9c"/><rect x="1" y="1" width="12" height="12" fill="#000"/><rect x="1" y="1" width="3" height="2" fill="#a4a8f4"/><rect x="1" y="4" width="3" height="2" fill="#a4a8f4"/><rect x="1" y="7" width="3" height="2" fill="#a4a8f4"/><rect x="1" y="10" width="3" height="3" fill="#a4a8f4"/><rect x="5" y="1" width="3" height="2" fill="#a4a8f4"/><rect x="5" y="4" width="3" height="2" fill="#fff"/><rect x="5" y="7" width="3" height="2" fill="#fff"/><rect x="5" y="10" width="3" height="3" fill="#fff"/><rect x="9" y="1" width="4" height="2" fill="#a4a8f4"/><rect x="9" y="4" width="4" height="2" fill="#fff"/><rect x="9" y="7" width="4" height="2" fill="#fff"/><rect x="9" y="10" width="4" height="3" fill="#fff"/><rect x="1" y="3" width="12" height="1" fill="#0c0c9c"/><rect x="4" y="1" width="1" height="12" fill="#0c0c9c"/><rect x="8" y="4" width="1" height="9" fill="#000"/><rect x="5" y="6" width="8" height="1" fill="#000"/><rect x="5" y="9" width="8" height="1" fill="#000"/><rect x="1" y="6" width="3" height="1" fill="#0c0c9c"/><rect x="1" y="9" width="3" height="1" fill="#0c0c9c"/><rect x="8" y="1" width="1" height="2" fill="#0c0c9c"/></svg><div class="a" style="left:61px;top:258px;white-space:nowrap">Lambda 2</div><div class="a" style="left:31px;top:280px;width:11px;height:1px;background:repeating-linear-gradient(90deg,#b0b0a8 0 1px,transparent 1px 2px)"></div><svg class="a" style="left:42px;top:273px" width="14" height="14" viewBox="0 0 14 14" shape-rendering="crispEdges"><rect x="0" y="0" width="14" height="14" fill="#0c0c9c"/><rect x="1" y="1" width="12" height="12" fill="#000"/><rect x="1" y="1" width="3" height="2" fill="#a4a8f4"/><rect x="1" y="4" width="3" height="2" fill="#a4a8f4"/><rect x="1" y="7" width="3" height="2" fill="#a4a8f4"/><rect x="1" y="10" width="3" height="3" fill="#a4a8f4"/><rect x="5" y="1" width="3" height="2" fill="#a4a8f4"/><rect x="5" y="4" width="3" height="2" fill="#fff"/><rect x="5" y="7" width="3" height="2" fill="#fff"/><rect x="5" y="10" width="3" height="3" fill="#fff"/><rect x="9" y="1" width="4" height="2" fill="#a4a8f4"/><rect x="9" y="4" width="4" height="2" fill="#fff"/><rect x="9" y="7" width="4" height="2" fill="#fff"/><rect x="9" y="10" width="4" height="3" fill="#fff"/><rect x="1" y="3" width="12" height="1" fill="#0c0c9c"/><rect x="4" y="1" width="1" height="12" fill="#0c0c9c"/><rect x="8" y="4" width="1" height="9" fill="#000"/><rect x="5" y="6" width="8" height="1" fill="#000"/><rect x="5" y="9" width="8" height="1" fill="#000"/><rect x="1" y="6" width="3" height="1" fill="#0c0c9c"/><rect x="1" y="9" width="3" height="1" fill="#0c0c9c"/><rect x="8" y="1" width="1" height="2" fill="#0c0c9c"/></svg><div class="a" style="left:61px;top:274px;white-space:nowrap">0x922D - 0x37 6x1</div><div class="a" style="left:31px;top:296px;width:11px;height:1px;background:repeating-linear-gradient(90deg,#b0b0a8 0 1px,transparent 1px 2px)"></div><svg class="a" style="left:42px;top:289px" width="14" height="14" viewBox="0 0 14 14" shape-rendering="crispEdges"><rect x="0" y="0" width="14" height="14" fill="#0c0c9c"/><rect x="1" y="1" width="12" height="12" fill="#000"/><rect x="1" y="1" width="3" height="2" fill="#a4a8f4"/><rect x="1" y="4" width="3" height="2" fill="#a4a8f4"/><rect x="1" y="7" width="3" height="2" fill="#a4a8f4"/><rect x="1" y="10" width="3" height="3" fill="#a4a8f4"/><rect x="5" y="1" width="3" height="2" fill="#a4a8f4"/><rect x="5" y="4" width="3" height="2" fill="#fff"/><rect x="5" y="7" width="3" height="2" fill="#fff"/><rect x="5" y="10" width="3" height="3" fill="#fff"/><rect x="9" y="1" width="4" height="2" fill="#a4a8f4"/><rect x="9" y="4" width="4" height="2" fill="#fff"/><rect x="9" y="7" width="4" height="2" fill="#fff"/><rect x="9" y="10" width="4" height="3" fill="#fff"/><rect x="1" y="3" width="12" height="1" fill="#0c0c9c"/><rect x="4" y="1" width="1" height="12" fill="#0c0c9c"/><rect x="8" y="4" width="1" height="9" fill="#000"/><rect x="5" y="6" width="8" height="1" fill="#000"/><rect x="5" y="9" width="8" height="1" fill="#000"/><rect x="1" y="6" width="3" height="1" fill="#0c0c9c"/><rect x="1" y="9" width="3" height="1" fill="#0c0c9c"/><rect x="8" y="1" width="1" height="2" fill="#0c0c9c"/></svg><div class="a" style="left:61px;top:290px;white-space:nowrap">RPM scale</div><div class="a" style="left:31px;top:312px;width:11px;height:1px;background:repeating-linear-gradient(90deg,#b0b0a8 0 1px,transparent 1px 2px)"></div><svg class="a" style="left:42px;top:305px" width="14" height="14" viewBox="0 0 14 14" shape-rendering="crispEdges"><rect x="0" y="0" width="14" height="14" fill="#0c0c9c"/><rect x="1" y="1" width="12" height="12" fill="#000"/><rect x="1" y="1" width="3" height="2" fill="#a4a8f4"/><rect x="1" y="4" width="3" height="2" fill="#a4a8f4"/><rect x="1" y="7" width="3" height="2" fill="#a4a8f4"/><rect x="1" y="10" width="3" height="3" fill="#a4a8f4"/><rect x="5" y="1" width="3" height="2" fill="#a4a8f4"/><rect x="5" y="4" width="3" height="2" fill="#fff"/><rect x="5" y="7" width="3" height="2" fill="#fff"/><rect x="5" y="10" width="3" height="3" fill="#fff"/><rect x="9" y="1" width="4" height="2" fill="#a4a8f4"/><rect x="9" y="4" width="4" height="2" fill="#fff"/><rect x="9" y="7" width="4" height="2" fill="#fff"/><rect x="9" y="10" width="4" height="3" fill="#fff"/><rect x="1" y="3" width="12" height="1" fill="#0c0c9c"/><rect x="4" y="1" width="1" height="12" fill="#0c0c9c"/><rect x="8" y="4" width="1" height="9" fill="#000"/><rect x="5" y="6" width="8" height="1" fill="#000"/><rect x="5" y="9" width="8" height="1" fill="#000"/><rect x="1" y="6" width="3" height="1" fill="#0c0c9c"/><rect x="1" y="9" width="3" height="1" fill="#0c0c9c"/><rect x="8" y="1" width="1" height="2" fill="#0c0c9c"/></svg><div class="a" style="left:61px;top:306px;white-space:nowrap">Load scale</div><div class="a" style="left:31px;top:328px;width:11px;height:1px;background:repeating-linear-gradient(90deg,#b0b0a8 0 1px,transparent 1px 2px)"></div><svg class="a" style="left:42px;top:321px" width="14" height="14" viewBox="0 0 14 14" shape-rendering="crispEdges"><rect x="0" y="0" width="14" height="14" fill="#0c0c9c"/><rect x="1" y="1" width="12" height="12" fill="#000"/><rect x="1" y="1" width="3" height="2" fill="#a4a8f4"/><rect x="1" y="4" width="3" height="2" fill="#a4a8f4"/><rect x="1" y="7" width="3" height="2" fill="#a4a8f4"/><rect x="1" y="10" width="3" height="3" fill="#a4a8f4"/><rect x="5" y="1" width="3" height="2" fill="#a4a8f4"/><rect x="5" y="4" width="3" height="2" fill="#fff"/><rect x="5" y="7" width="3" height="2" fill="#fff"/><rect x="5" y="10" width="3" height="3" fill="#fff"/><rect x="9" y="1" width="4" height="2" fill="#a4a8f4"/><rect x="9" y="4" width="4" height="2" fill="#fff"/><rect x="9" y="7" width="4" height="2" fill="#fff"/><rect x="9" y="10" width="4" height="3" fill="#fff"/><rect x="1" y="3" width="12" height="1" fill="#0c0c9c"/><rect x="4" y="1" width="1" height="12" fill="#0c0c9c"/><rect x="8" y="4" width="1" height="9" fill="#000"/><rect x="5" y="6" width="8" height="1" fill="#000"/><rect x="5" y="9" width="8" height="1" fill="#000"/><rect x="1" y="6" width="3" height="1" fill="#0c0c9c"/><rect x="1" y="9" width="3" height="1" fill="#0c0c9c"/><rect x="8" y="1" width="1" height="2" fill="#0c0c9c"/></svg><div class="a" style="left:61px;top:322px;white-space:nowrap">Intake air temp scale</div><div class="a" style="left:31px;top:344px;width:11px;height:1px;background:repeating-linear-gradient(90deg,#b0b0a8 0 1px,transparent 1px 2px)"></div><svg class="a" style="left:42px;top:337px" width="14" height="14" viewBox="0 0 14 14" shape-rendering="crispEdges"><rect x="0" y="0" width="14" height="14" fill="#0c0c9c"/><rect x="1" y="1" width="12" height="12" fill="#000"/><rect x="1" y="1" width="3" height="2" fill="#a4a8f4"/><rect x="1" y="4" width="3" height="2" fill="#a4a8f4"/><rect x="1" y="7" width="3" height="2" fill="#a4a8f4"/><rect x="1" y="10" width="3" height="3" fill="#a4a8f4"/><rect x="5" y="1" width="3" height="2" fill="#a4a8f4"/><rect x="5" y="4" width="3" height="2" fill="#fff"/><rect x="5" y="7" width="3" height="2" fill="#fff"/><rect x="5" y="10" width="3" height="3" fill="#fff"/><rect x="9" y="1" width="4" height="2" fill="#a4a8f4"/><rect x="9" y="4" width="4" height="2" fill="#fff"/><rect x="9" y="7" width="4" height="2" fill="#fff"/><rect x="9" y="10" width="4" height="3" fill="#fff"/><rect x="1" y="3" width="12" height="1" fill="#0c0c9c"/><rect x="4" y="1" width="1" height="12" fill="#0c0c9c"/><rect x="8" y="4" width="1" height="9" fill="#000"/><rect x="5" y="6" width="8" height="1" fill="#000"/><rect x="5" y="9" width="8" height="1" fill="#000"/><rect x="1" y="6" width="3" height="1" fill="#0c0c9c"/><rect x="1" y="9" width="3" height="1" fill="#0c0c9c"/><rect x="8" y="1" width="1" height="2" fill="#0c0c9c"/></svg><div class="a" style="left:61px;top:338px;white-space:nowrap">Head temperature scale</div><div class="a" style="left:31px;top:360px;width:11px;height:1px;background:repeating-linear-gradient(90deg,#b0b0a8 0 1px,transparent 1px 2px)"></div><svg class="a" style="left:42px;top:353px" width="14" height="14" viewBox="0 0 14 14" shape-rendering="crispEdges"><rect x="0" y="0" width="14" height="14" fill="#0c0c9c"/><rect x="1" y="1" width="12" height="12" fill="#000"/><rect x="1" y="1" width="3" height="2" fill="#a4a8f4"/><rect x="1" y="4" width="3" height="2" fill="#a4a8f4"/><rect x="1" y="7" width="3" height="2" fill="#a4a8f4"/><rect x="1" y="10" width="3" height="3" fill="#a4a8f4"/><rect x="5" y="1" width="3" height="2" fill="#a4a8f4"/><rect x="5" y="4" width="3" height="2" fill="#fff"/><rect x="5" y="7" width="3" height="2" fill="#fff"/><rect x="5" y="10" width="3" height="3" fill="#fff"/><rect x="9" y="1" width="4" height="2" fill="#a4a8f4"/><rect x="9" y="4" width="4" height="2" fill="#fff"/><rect x="9" y="7" width="4" height="2" fill="#fff"/><rect x="9" y="10" width="4" height="3" fill="#fff"/><rect x="1" y="3" width="12" height="1" fill="#0c0c9c"/><rect x="4" y="1" width="1" height="12" fill="#0c0c9c"/><rect x="8" y="4" width="1" height="9" fill="#000"/><rect x="5" y="6" width="8" height="1" fill="#000"/><rect x="5" y="9" width="8" height="1" fill="#000"/><rect x="1" y="6" width="3" height="1" fill="#0c0c9c"/><rect x="1" y="9" width="3" height="1" fill="#0c0c9c"/><rect x="8" y="1" width="1" height="2" fill="#0c0c9c"/></svg><div class="a" style="left:61px;top:354px;white-space:nowrap;letter-spacing:0.35px">------------------</div><div class="a" style="left:31px;top:376px;width:11px;height:1px;background:repeating-linear-gradient(90deg,#b0b0a8 0 1px,transparent 1px 2px)"></div><svg class="a" style="left:42px;top:369px" width="14" height="14" viewBox="0 0 14 14" shape-rendering="crispEdges"><rect x="0" y="0" width="14" height="14" fill="#0c0c9c"/><rect x="1" y="1" width="12" height="12" fill="#000"/><rect x="1" y="1" width="3" height="2" fill="#a4a8f4"/><rect x="1" y="4" width="3" height="2" fill="#a4a8f4"/><rect x="1" y="7" width="3" height="2" fill="#a4a8f4"/><rect x="1" y="10" width="3" height="3" fill="#a4a8f4"/><rect x="5" y="1" width="3" height="2" fill="#a4a8f4"/><rect x="5" y="4" width="3" height="2" fill="#fff"/><rect x="5" y="7" width="3" height="2" fill="#fff"/><rect x="5" y="10" width="3" height="3" fill="#fff"/><rect x="9" y="1" width="4" height="2" fill="#a4a8f4"/><rect x="9" y="4" width="4" height="2" fill="#fff"/><rect x="9" y="7" width="4" height="2" fill="#fff"/><rect x="9" y="10" width="4" height="3" fill="#fff"/><rect x="1" y="3" width="12" height="1" fill="#0c0c9c"/><rect x="4" y="1" width="1" height="12" fill="#0c0c9c"/><rect x="8" y="4" width="1" height="9" fill="#000"/><rect x="5" y="6" width="8" height="1" fill="#000"/><rect x="5" y="9" width="8" height="1" fill="#000"/><rect x="1" y="6" width="3" height="1" fill="#0c0c9c"/><rect x="1" y="9" width="3" height="1" fill="#0c0c9c"/><rect x="8" y="1" width="1" height="2" fill="#0c0c9c"/></svg><div class="a" style="left:61px;top:370px;white-space:nowrap">0x8BE8 - 2x1 - 0x38</div><div class="a" style="left:31px;top:392px;width:11px;height:1px;background:repeating-linear-gradient(90deg,#b0b0a8 0 1px,transparent 1px 2px)"></div><svg class="a" style="left:42px;top:385px" width="14" height="14" viewBox="0 0 14 14" shape-rendering="crispEdges"><rect x="0" y="0" width="14" height="14" fill="#0c0c9c"/><rect x="1" y="1" width="12" height="12" fill="#000"/><rect x="1" y="1" width="3" height="2" fill="#a4a8f4"/><rect x="1" y="4" width="3" height="2" fill="#a4a8f4"/><rect x="1" y="7" width="3" height="2" fill="#a4a8f4"/><rect x="1" y="10" width="3" height="3" fill="#a4a8f4"/><rect x="5" y="1" width="3" height="2" fill="#a4a8f4"/><rect x="5" y="4" width="3" height="2" fill="#fff"/><rect x="5" y="7" width="3" height="2" fill="#fff"/><rect x="5" y="10" width="3" height="3" fill="#fff"/><rect x="9" y="1" width="4" height="2" fill="#a4a8f4"/><rect x="9" y="4" width="4" height="2" fill="#fff"/><rect x="9" y="7" width="4" height="2" fill="#fff"/><rect x="9" y="10" width="4" height="3" fill="#fff"/><rect x="1" y="3" width="12" height="1" fill="#0c0c9c"/><rect x="4" y="1" width="1" height="12" fill="#0c0c9c"/><rect x="8" y="4" width="1" height="9" fill="#000"/><rect x="5" y="6" width="8" height="1" fill="#000"/><rect x="5" y="9" width="8" height="1" fill="#000"/><rect x="1" y="6" width="3" height="1" fill="#0c0c9c"/><rect x="1" y="9" width="3" height="1" fill="#0c0c9c"/><rect x="8" y="1" width="1" height="2" fill="#0c0c9c"/></svg><div class="a" style="left:61px;top:386px;white-space:nowrap">0x8BE8 - 0x38 2x1</div><div class="a" style="left:31px;top:408px;width:11px;height:1px;background:repeating-linear-gradient(90deg,#b0b0a8 0 1px,transparent 1px 2px)"></div><svg class="a" style="left:42px;top:401px" width="14" height="14" viewBox="0 0 14 14" shape-rendering="crispEdges"><rect x="0" y="0" width="14" height="14" fill="#0c0c9c"/><rect x="1" y="1" width="12" height="12" fill="#000"/><rect x="1" y="1" width="3" height="2" fill="#a4a8f4"/><rect x="1" y="4" width="3" height="2" fill="#a4a8f4"/><rect x="1" y="7" width="3" height="2" fill="#a4a8f4"/><rect x="1" y="10" width="3" height="3" fill="#a4a8f4"/><rect x="5" y="1" width="3" height="2" fill="#a4a8f4"/><rect x="5" y="4" width="3" height="2" fill="#fff"/><rect x="5" y="7" width="3" height="2" fill="#fff"/><rect x="5" y="10" width="3" height="3" fill="#fff"/><rect x="9" y="1" width="4" height="2" fill="#a4a8f4"/><rect x="9" y="4" width="4" height="2" fill="#fff"/><rect x="9" y="7" width="4" height="2" fill="#fff"/><rect x="9" y="10" width="4" height="3" fill="#fff"/><rect x="1" y="3" width="12" height="1" fill="#0c0c9c"/><rect x="4" y="1" width="1" height="12" fill="#0c0c9c"/><rect x="8" y="4" width="1" height="9" fill="#000"/><rect x="5" y="6" width="8" height="1" fill="#000"/><rect x="5" y="9" width="8" height="1" fill="#000"/><rect x="1" y="6" width="3" height="1" fill="#0c0c9c"/><rect x="1" y="9" width="3" height="1" fill="#0c0c9c"/><rect x="8" y="1" width="1" height="2" fill="#0c0c9c"/></svg><div class="a" style="left:61px;top:402px;white-space:nowrap">0x8BEE - 4x1 - 0x4</div><div class="a" style="left:31px;top:424px;width:11px;height:1px;background:repeating-linear-gradient(90deg,#b0b0a8 0 1px,transparent 1px 2px)"></div><svg class="a" style="left:42px;top:417px" width="14" height="14" viewBox="0 0 14 14" shape-rendering="crispEdges"><rect x="0" y="0" width="14" height="14" fill="#0c0c9c"/><rect x="1" y="1" width="12" height="12" fill="#000"/><rect x="1" y="1" width="3" height="2" fill="#a4a8f4"/><rect x="1" y="4" width="3" height="2" fill="#a4a8f4"/><rect x="1" y="7" width="3" height="2" fill="#a4a8f4"/><rect x="1" y="10" width="3" height="3" fill="#a4a8f4"/><rect x="5" y="1" width="3" height="2" fill="#a4a8f4"/><rect x="5" y="4" width="3" height="2" fill="#fff"/><rect x="5" y="7" width="3" height="2" fill="#fff"/><rect x="5" y="10" width="3" height="3" fill="#fff"/><rect x="9" y="1" width="4" height="2" fill="#a4a8f4"/><rect x="9" y="4" width="4" height="2" fill="#fff"/><rect x="9" y="7" width="4" height="2" fill="#fff"/><rect x="9" y="10" width="4" height="3" fill="#fff"/><rect x="1" y="3" width="12" height="1" fill="#0c0c9c"/><rect x="4" y="1" width="1" height="12" fill="#0c0c9c"/><rect x="8" y="4" width="1" height="9" fill="#000"/><rect x="5" y="6" width="8" height="1" fill="#000"/><rect x="5" y="9" width="8" height="1" fill="#000"/><rect x="1" y="6" width="3" height="1" fill="#0c0c9c"/><rect x="1" y="9" width="3" height="1" fill="#0c0c9c"/><rect x="8" y="1" width="1" height="2" fill="#0c0c9c"/></svg><div class="a" style="left:61px;top:418px;white-space:nowrap">0x8BEE - 0x4 4x1</div><div class="a" style="left:31px;top:440px;width:11px;height:1px;background:repeating-linear-gradient(90deg,#b0b0a8 0 1px,transparent 1px 2px)"></div><svg class="a" style="left:42px;top:433px" width="14" height="14" viewBox="0 0 14 14" shape-rendering="crispEdges"><rect x="0" y="0" width="14" height="14" fill="#0c0c9c"/><rect x="1" y="1" width="12" height="12" fill="#000"/><rect x="1" y="1" width="3" height="2" fill="#a4a8f4"/><rect x="1" y="4" width="3" height="2" fill="#a4a8f4"/><rect x="1" y="7" width="3" height="2" fill="#a4a8f4"/><rect x="1" y="10" width="3" height="3" fill="#a4a8f4"/><rect x="5" y="1" width="3" height="2" fill="#a4a8f4"/><rect x="5" y="4" width="3" height="2" fill="#fff"/><rect x="5" y="7" width="3" height="2" fill="#fff"/><rect x="5" y="10" width="3" height="3" fill="#fff"/><rect x="9" y="1" width="4" height="2" fill="#a4a8f4"/><rect x="9" y="4" width="4" height="2" fill="#fff"/><rect x="9" y="7" width="4" height="2" fill="#fff"/><rect x="9" y="10" width="4" height="3" fill="#fff"/><rect x="1" y="3" width="12" height="1" fill="#0c0c9c"/><rect x="4" y="1" width="1" height="12" fill="#0c0c9c"/><rect x="8" y="4" width="1" height="9" fill="#000"/><rect x="5" y="6" width="8" height="1" fill="#000"/><rect x="5" y="9" width="8" height="1" fill="#000"/><rect x="1" y="6" width="3" height="1" fill="#0c0c9c"/><rect x="1" y="9" width="3" height="1" fill="#0c0c9c"/><rect x="8" y="1" width="1" height="2" fill="#0c0c9c"/></svg><div class="a" style="left:61px;top:434px;white-space:nowrap">0x8BF8 - 7x1 - 0x4</div><div class="a" style="left:31px;top:456px;width:11px;height:1px;background:repeating-linear-gradient(90deg,#b0b0a8 0 1px,transparent 1px 2px)"></div><svg class="a" style="left:42px;top:449px" width="14" height="14" viewBox="0 0 14 14" shape-rendering="crispEdges"><rect x="0" y="0" width="14" height="14" fill="#0c0c9c"/><rect x="1" y="1" width="12" height="12" fill="#000"/><rect x="1" y="1" width="3" height="2" fill="#a4a8f4"/><rect x="1" y="4" width="3" height="2" fill="#a4a8f4"/><rect x="1" y="7" width="3" height="2" fill="#a4a8f4"/><rect x="1" y="10" width="3" height="3" fill="#a4a8f4"/><rect x="5" y="1" width="3" height="2" fill="#a4a8f4"/><rect x="5" y="4" width="3" height="2" fill="#fff"/><rect x="5" y="7" width="3" height="2" fill="#fff"/><rect x="5" y="10" width="3" height="3" fill="#fff"/><rect x="9" y="1" width="4" height="2" fill="#a4a8f4"/><rect x="9" y="4" width="4" height="2" fill="#fff"/><rect x="9" y="7" width="4" height="2" fill="#fff"/><rect x="9" y="10" width="4" height="3" fill="#fff"/><rect x="1" y="3" width="12" height="1" fill="#0c0c9c"/><rect x="4" y="1" width="1" height="12" fill="#0c0c9c"/><rect x="8" y="4" width="1" height="9" fill="#000"/><rect x="5" y="6" width="8" height="1" fill="#000"/><rect x="5" y="9" width="8" height="1" fill="#000"/><rect x="1" y="6" width="3" height="1" fill="#0c0c9c"/><rect x="1" y="9" width="3" height="1" fill="#0c0c9c"/><rect x="8" y="1" width="1" height="2" fill="#0c0c9c"/></svg><div class="a" style="left:61px;top:450px;white-space:nowrap">0x8BF8 - 0x4 7x1</div><div class="a" style="left:31px;top:472px;width:11px;height:1px;background:repeating-linear-gradient(90deg,#b0b0a8 0 1px,transparent 1px 2px)"></div><svg class="a" style="left:42px;top:465px" width="14" height="14" viewBox="0 0 14 14" shape-rendering="crispEdges"><rect x="0" y="0" width="14" height="14" fill="#0c0c9c"/><rect x="1" y="1" width="12" height="12" fill="#000"/><rect x="1" y="1" width="3" height="2" fill="#a4a8f4"/><rect x="1" y="4" width="3" height="2" fill="#a4a8f4"/><rect x="1" y="7" width="3" height="2" fill="#a4a8f4"/><rect x="1" y="10" width="3" height="3" fill="#a4a8f4"/><rect x="5" y="1" width="3" height="2" fill="#a4a8f4"/><rect x="5" y="4" width="3" height="2" fill="#fff"/><rect x="5" y="7" width="3" height="2" fill="#fff"/><rect x="5" y="10" width="3" height="3" fill="#fff"/><rect x="9" y="1" width="4" height="2" fill="#a4a8f4"/><rect x="9" y="4" width="4" height="2" fill="#fff"/><rect x="9" y="7" width="4" height="2" fill="#fff"/><rect x="9" y="10" width="4" height="3" fill="#fff"/><rect x="1" y="3" width="12" height="1" fill="#0c0c9c"/><rect x="4" y="1" width="1" height="12" fill="#0c0c9c"/><rect x="8" y="4" width="1" height="9" fill="#000"/><rect x="5" y="6" width="8" height="1" fill="#000"/><rect x="5" y="9" width="8" height="1" fill="#000"/><rect x="1" y="6" width="3" height="1" fill="#0c0c9c"/><rect x="1" y="9" width="3" height="1" fill="#0c0c9c"/><rect x="8" y="1" width="1" height="2" fill="#0c0c9c"/></svg><div class="a" style="left:61px;top:466px;white-space:nowrap">0x8C08 - 4x1 - 0x37</div><div class="a" style="left:31px;top:488px;width:11px;height:1px;background:repeating-linear-gradient(90deg,#b0b0a8 0 1px,transparent 1px 2px)"></div><svg class="a" style="left:42px;top:481px" width="14" height="14" viewBox="0 0 14 14" shape-rendering="crispEdges"><rect x="0" y="0" width="14" height="14" fill="#0c0c9c"/><rect x="1" y="1" width="12" height="12" fill="#000"/><rect x="1" y="1" width="3" height="2" fill="#a4a8f4"/><rect x="1" y="4" width="3" height="2" fill="#a4a8f4"/><rect x="1" y="7" width="3" height="2" fill="#a4a8f4"/><rect x="1" y="10" width="3" height="3" fill="#a4a8f4"/><rect x="5" y="1" width="3" height="2" fill="#a4a8f4"/><rect x="5" y="4" width="3" height="2" fill="#fff"/><rect x="5" y="7" width="3" height="2" fill="#fff"/><rect x="5" y="10" width="3" height="3" fill="#fff"/><rect x="9" y="1" width="4" height="2" fill="#a4a8f4"/><rect x="9" y="4" width="4" height="2" fill="#fff"/><rect x="9" y="7" width="4" height="2" fill="#fff"/><rect x="9" y="10" width="4" height="3" fill="#fff"/><rect x="1" y="3" width="12" height="1" fill="#0c0c9c"/><rect x="4" y="1" width="1" height="12" fill="#0c0c9c"/><rect x="8" y="4" width="1" height="9" fill="#000"/><rect x="5" y="6" width="8" height="1" fill="#000"/><rect x="5" y="9" width="8" height="1" fill="#000"/><rect x="1" y="6" width="3" height="1" fill="#0c0c9c"/><rect x="1" y="9" width="3" height="1" fill="#0c0c9c"/><rect x="8" y="1" width="1" height="2" fill="#0c0c9c"/></svg><div class="a" style="left:61px;top:482px;white-space:nowrap">0x8C08 - 0x37 4x1</div><div class="a" style="left:31px;top:504px;width:11px;height:1px;background:repeating-linear-gradient(90deg,#b0b0a8 0 1px,transparent 1px 2px)"></div><svg class="a" style="left:42px;top:497px" width="14" height="14" viewBox="0 0 14 14" shape-rendering="crispEdges"><rect x="0" y="0" width="14" height="14" fill="#0c0c9c"/><rect x="1" y="1" width="12" height="12" fill="#000"/><rect x="1" y="1" width="3" height="2" fill="#a4a8f4"/><rect x="1" y="4" width="3" height="2" fill="#a4a8f4"/><rect x="1" y="7" width="3" height="2" fill="#a4a8f4"/><rect x="1" y="10" width="3" height="3" fill="#a4a8f4"/><rect x="5" y="1" width="3" height="2" fill="#a4a8f4"/><rect x="5" y="4" width="3" height="2" fill="#fff"/><rect x="5" y="7" width="3" height="2" fill="#fff"/><rect x="5" y="10" width="3" height="3" fill="#fff"/><rect x="9" y="1" width="4" height="2" fill="#a4a8f4"/><rect x="9" y="4" width="4" height="2" fill="#fff"/><rect x="9" y="7" width="4" height="2" fill="#fff"/><rect x="9" y="10" width="4" height="3" fill="#fff"/><rect x="1" y="3" width="12" height="1" fill="#0c0c9c"/><rect x="4" y="1" width="1" height="12" fill="#0c0c9c"/><rect x="8" y="4" width="1" height="9" fill="#000"/><rect x="5" y="6" width="8" height="1" fill="#000"/><rect x="5" y="9" width="8" height="1" fill="#000"/><rect x="1" y="6" width="3" height="1" fill="#0c0c9c"/><rect x="1" y="9" width="3" height="1" fill="#0c0c9c"/><rect x="8" y="1" width="1" height="2" fill="#0c0c9c"/></svg><div class="a" style="left:61px;top:498px;white-space:nowrap">0x8C12 - 3x1 - 0x38</div><div class="a" style="left:31px;top:520px;width:11px;height:1px;background:repeating-linear-gradient(90deg,#b0b0a8 0 1px,transparent 1px 2px)"></div><svg class="a" style="left:42px;top:513px" width="14" height="14" viewBox="0 0 14 14" shape-rendering="crispEdges"><rect x="0" y="0" width="14" height="14" fill="#0c0c9c"/><rect x="1" y="1" width="12" height="12" fill="#000"/><rect x="1" y="1" width="3" height="2" fill="#a4a8f4"/><rect x="1" y="4" width="3" height="2" fill="#a4a8f4"/><rect x="1" y="7" width="3" height="2" fill="#a4a8f4"/><rect x="1" y="10" width="3" height="3" fill="#a4a8f4"/><rect x="5" y="1" width="3" height="2" fill="#a4a8f4"/><rect x="5" y="4" width="3" height="2" fill="#fff"/><rect x="5" y="7" width="3" height="2" fill="#fff"/><rect x="5" y="10" width="3" height="3" fill="#fff"/><rect x="9" y="1" width="4" height="2" fill="#a4a8f4"/><rect x="9" y="4" width="4" height="2" fill="#fff"/><rect x="9" y="7" width="4" height="2" fill="#fff"/><rect x="9" y="10" width="4" height="3" fill="#fff"/><rect x="1" y="3" width="12" height="1" fill="#0c0c9c"/><rect x="4" y="1" width="1" height="12" fill="#0c0c9c"/><rect x="8" y="4" width="1" height="9" fill="#000"/><rect x="5" y="6" width="8" height="1" fill="#000"/><rect x="5" y="9" width="8" height="1" fill="#000"/><rect x="1" y="6" width="3" height="1" fill="#0c0c9c"/><rect x="1" y="9" width="3" height="1" fill="#0c0c9c"/><rect x="8" y="1" width="1" height="2" fill="#0c0c9c"/></svg><div class="a" style="left:61px;top:514px;white-space:nowrap">0x8C12 - 0x38 3x1</div><div class="a" style="left:31px;top:536px;width:11px;height:1px;background:repeating-linear-gradient(90deg,#b0b0a8 0 1px,transparent 1px 2px)"></div><svg class="a" style="left:42px;top:529px" width="14" height="14" viewBox="0 0 14 14" shape-rendering="crispEdges"><rect x="0" y="0" width="14" height="14" fill="#0c0c9c"/><rect x="1" y="1" width="12" height="12" fill="#000"/><rect x="1" y="1" width="3" height="2" fill="#a4a8f4"/><rect x="1" y="4" width="3" height="2" fill="#a4a8f4"/><rect x="1" y="7" width="3" height="2" fill="#a4a8f4"/><rect x="1" y="10" width="3" height="3" fill="#a4a8f4"/><rect x="5" y="1" width="3" height="2" fill="#a4a8f4"/><rect x="5" y="4" width="3" height="2" fill="#fff"/><rect x="5" y="7" width="3" height="2" fill="#fff"/><rect x="5" y="10" width="3" height="3" fill="#fff"/><rect x="9" y="1" width="4" height="2" fill="#a4a8f4"/><rect x="9" y="4" width="4" height="2" fill="#fff"/><rect x="9" y="7" width="4" height="2" fill="#fff"/><rect x="9" y="10" width="4" height="3" fill="#fff"/><rect x="1" y="3" width="12" height="1" fill="#0c0c9c"/><rect x="4" y="1" width="1" height="12" fill="#0c0c9c"/><rect x="8" y="4" width="1" height="9" fill="#000"/><rect x="5" y="6" width="8" height="1" fill="#000"/><rect x="5" y="9" width="8" height="1" fill="#000"/><rect x="1" y="6" width="3" height="1" fill="#0c0c9c"/><rect x="1" y="9" width="3" height="1" fill="#0c0c9c"/><rect x="8" y="1" width="1" height="2" fill="#0c0c9c"/></svg><div class="a" style="left:61px;top:530px;white-space:nowrap">0x8C1A - 2x1 - 0x38</div><div class="a" style="left:31px;top:552px;width:11px;height:1px;background:repeating-linear-gradient(90deg,#b0b0a8 0 1px,transparent 1px 2px)"></div><svg class="a" style="left:42px;top:545px" width="14" height="14" viewBox="0 0 14 14" shape-rendering="crispEdges"><rect x="0" y="0" width="14" height="14" fill="#0c0c9c"/><rect x="1" y="1" width="12" height="12" fill="#000"/><rect x="1" y="1" width="3" height="2" fill="#a4a8f4"/><rect x="1" y="4" width="3" height="2" fill="#a4a8f4"/><rect x="1" y="7" width="3" height="2" fill="#a4a8f4"/><rect x="1" y="10" width="3" height="3" fill="#a4a8f4"/><rect x="5" y="1" width="3" height="2" fill="#a4a8f4"/><rect x="5" y="4" width="3" height="2" fill="#fff"/><rect x="5" y="7" width="3" height="2" fill="#fff"/><rect x="5" y="10" width="3" height="3" fill="#fff"/><rect x="9" y="1" width="4" height="2" fill="#a4a8f4"/><rect x="9" y="4" width="4" height="2" fill="#fff"/><rect x="9" y="7" width="4" height="2" fill="#fff"/><rect x="9" y="10" width="4" height="3" fill="#fff"/><rect x="1" y="3" width="12" height="1" fill="#0c0c9c"/><rect x="4" y="1" width="1" height="12" fill="#0c0c9c"/><rect x="8" y="4" width="1" height="9" fill="#000"/><rect x="5" y="6" width="8" height="1" fill="#000"/><rect x="5" y="9" width="8" height="1" fill="#000"/><rect x="1" y="6" width="3" height="1" fill="#0c0c9c"/><rect x="1" y="9" width="3" height="1" fill="#0c0c9c"/><rect x="8" y="1" width="1" height="2" fill="#0c0c9c"/></svg><div class="a" style="left:61px;top:546px;white-space:nowrap">0x8C1A - 0x38 2x1</div><div class="a" style="left:31px;top:568px;width:11px;height:1px;background:repeating-linear-gradient(90deg,#b0b0a8 0 1px,transparent 1px 2px)"></div><svg class="a" style="left:42px;top:561px" width="14" height="14" viewBox="0 0 14 14" shape-rendering="crispEdges"><rect x="0" y="0" width="14" height="14" fill="#0c0c9c"/><rect x="1" y="1" width="12" height="12" fill="#000"/><rect x="1" y="1" width="3" height="2" fill="#a4a8f4"/><rect x="1" y="4" width="3" height="2" fill="#a4a8f4"/><rect x="1" y="7" width="3" height="2" fill="#a4a8f4"/><rect x="1" y="10" width="3" height="3" fill="#a4a8f4"/><rect x="5" y="1" width="3" height="2" fill="#a4a8f4"/><rect x="5" y="4" width="3" height="2" fill="#fff"/><rect x="5" y="7" width="3" height="2" fill="#fff"/><rect x="5" y="10" width="3" height="3" fill="#fff"/><rect x="9" y="1" width="4" height="2" fill="#a4a8f4"/><rect x="9" y="4" width="4" height="2" fill="#fff"/><rect x="9" y="7" width="4" height="2" fill="#fff"/><rect x="9" y="10" width="4" height="3" fill="#fff"/><rect x="1" y="3" width="12" height="1" fill="#0c0c9c"/><rect x="4" y="1" width="1" height="12" fill="#0c0c9c"/><rect x="8" y="4" width="1" height="9" fill="#000"/><rect x="5" y="6" width="8" height="1" fill="#000"/><rect x="5" y="9" width="8" height="1" fill="#000"/><rect x="1" y="6" width="3" height="1" fill="#0c0c9c"/><rect x="1" y="9" width="3" height="1" fill="#0c0c9c"/><rect x="8" y="1" width="1" height="2" fill="#0c0c9c"/></svg><div class="a" style="left:61px;top:562px;white-space:nowrap">0x8C20 - 12x1 - 0x3A</div><div class="a" style="left:31px;top:584px;width:11px;height:1px;background:repeating-linear-gradient(90deg,#b0b0a8 0 1px,transparent 1px 2px)"></div><svg class="a" style="left:42px;top:577px" width="14" height="14" viewBox="0 0 14 14" shape-rendering="crispEdges"><rect x="0" y="0" width="14" height="14" fill="#0c0c9c"/><rect x="1" y="1" width="12" height="12" fill="#000"/><rect x="1" y="1" width="3" height="2" fill="#a4a8f4"/><rect x="1" y="4" width="3" height="2" fill="#a4a8f4"/><rect x="1" y="7" width="3" height="2" fill="#a4a8f4"/><rect x="1" y="10" width="3" height="3" fill="#a4a8f4"/><rect x="5" y="1" width="3" height="2" fill="#a4a8f4"/><rect x="5" y="4" width="3" height="2" fill="#fff"/><rect x="5" y="7" width="3" height="2" fill="#fff"/><rect x="5" y="10" width="3" height="3" fill="#fff"/><rect x="9" y="1" width="4" height="2" fill="#a4a8f4"/><rect x="9" y="4" width="4" height="2" fill="#fff"/><rect x="9" y="7" width="4" height="2" fill="#fff"/><rect x="9" y="10" width="4" height="3" fill="#fff"/><rect x="1" y="3" width="12" height="1" fill="#0c0c9c"/><rect x="4" y="1" width="1" height="12" fill="#0c0c9c"/><rect x="8" y="4" width="1" height="9" fill="#000"/><rect x="5" y="6" width="8" height="1" fill="#000"/><rect x="5" y="9" width="8" height="1" fill="#000"/><rect x="1" y="6" width="3" height="1" fill="#0c0c9c"/><rect x="1" y="9" width="3" height="1" fill="#0c0c9c"/><rect x="8" y="1" width="1" height="2" fill="#0c0c9c"/></svg><div class="a" style="left:61px;top:578px;white-space:nowrap">0x8C2E - 12x1 - 0x36</div><div class="a" style="left:31px;top:600px;width:11px;height:1px;background:repeating-linear-gradient(90deg,#b0b0a8 0 1px,transparent 1px 2px)"></div><svg class="a" style="left:42px;top:593px" width="14" height="14" viewBox="0 0 14 14" shape-rendering="crispEdges"><rect x="0" y="0" width="14" height="14" fill="#0c0c9c"/><rect x="1" y="1" width="12" height="12" fill="#000"/><rect x="1" y="1" width="3" height="2" fill="#a4a8f4"/><rect x="1" y="4" width="3" height="2" fill="#a4a8f4"/><rect x="1" y="7" width="3" height="2" fill="#a4a8f4"/><rect x="1" y="10" width="3" height="3" fill="#a4a8f4"/><rect x="5" y="1" width="3" height="2" fill="#a4a8f4"/><rect x="5" y="4" width="3" height="2" fill="#fff"/><rect x="5" y="7" width="3" height="2" fill="#fff"/><rect x="5" y="10" width="3" height="3" fill="#fff"/><rect x="9" y="1" width="4" height="2" fill="#a4a8f4"/><rect x="9" y="4" width="4" height="2" fill="#fff"/><rect x="9" y="7" width="4" height="2" fill="#fff"/><rect x="9" y="10" width="4" height="3" fill="#fff"/><rect x="1" y="3" width="12" height="1" fill="#0c0c9c"/><rect x="4" y="1" width="1" height="12" fill="#0c0c9c"/><rect x="8" y="4" width="1" height="9" fill="#000"/><rect x="5" y="6" width="8" height="1" fill="#000"/><rect x="5" y="9" width="8" height="1" fill="#000"/><rect x="1" y="6" width="3" height="1" fill="#0c0c9c"/><rect x="1" y="9" width="3" height="1" fill="#0c0c9c"/><rect x="8" y="1" width="1" height="2" fill="#0c0c9c"/></svg><div class="a" style="left:61px;top:594px;white-space:nowrap">0x8C20 - 0x3A by 0x36 12x12</div><div class="a" style="left:31px;top:616px;width:11px;height:1px;background:repeating-linear-gradient(90deg,#b0b0a8 0 1px,transparent 1px 2px)"></div><svg class="a" style="left:42px;top:609px" width="14" height="14" viewBox="0 0 14 14" shape-rendering="crispEdges"><rect x="0" y="0" width="14" height="14" fill="#0c0c9c"/><rect x="1" y="1" width="12" height="12" fill="#000"/><rect x="1" y="1" width="3" height="2" fill="#a4a8f4"/><rect x="1" y="4" width="3" height="2" fill="#a4a8f4"/><rect x="1" y="7" width="3" height="2" fill="#a4a8f4"/><rect x="1" y="10" width="3" height="3" fill="#a4a8f4"/><rect x="5" y="1" width="3" height="2" fill="#a4a8f4"/><rect x="5" y="4" width="3" height="2" fill="#fff"/><rect x="5" y="7" width="3" height="2" fill="#fff"/><rect x="5" y="10" width="3" height="3" fill="#fff"/><rect x="9" y="1" width="4" height="2" fill="#a4a8f4"/><rect x="9" y="4" width="4" height="2" fill="#fff"/><rect x="9" y="7" width="4" height="2" fill="#fff"/><rect x="9" y="10" width="4" height="3" fill="#fff"/><rect x="1" y="3" width="12" height="1" fill="#0c0c9c"/><rect x="4" y="1" width="1" height="12" fill="#0c0c9c"/><rect x="8" y="4" width="1" height="9" fill="#000"/><rect x="5" y="6" width="8" height="1" fill="#000"/><rect x="5" y="9" width="8" height="1" fill="#000"/><rect x="1" y="6" width="3" height="1" fill="#0c0c9c"/><rect x="1" y="9" width="3" height="1" fill="#0c0c9c"/><rect x="8" y="1" width="1" height="2" fill="#0c0c9c"/></svg><div class="a" style="left:61px;top:610px;white-space:nowrap">0x8CCC - 5x1 - 0x3A</div><div class="a" style="left:31px;top:632px;width:11px;height:1px;background:repeating-linear-gradient(90deg,#b0b0a8 0 1px,transparent 1px 2px)"></div><svg class="a" style="left:42px;top:625px" width="14" height="14" viewBox="0 0 14 14" shape-rendering="crispEdges"><rect x="0" y="0" width="14" height="14" fill="#0c0c9c"/><rect x="1" y="1" width="12" height="12" fill="#000"/><rect x="1" y="1" width="3" height="2" fill="#a4a8f4"/><rect x="1" y="4" width="3" height="2" fill="#a4a8f4"/><rect x="1" y="7" width="3" height="2" fill="#a4a8f4"/><rect x="1" y="10" width="3" height="3" fill="#a4a8f4"/><rect x="5" y="1" width="3" height="2" fill="#a4a8f4"/><rect x="5" y="4" width="3" height="2" fill="#fff"/><rect x="5" y="7" width="3" height="2" fill="#fff"/><rect x="5" y="10" width="3" height="3" fill="#fff"/><rect x="9" y="1" width="4" height="2" fill="#a4a8f4"/><rect x="9" y="4" width="4" height="2" fill="#fff"/><rect x="9" y="7" width="4" height="2" fill="#fff"/><rect x="9" y="10" width="4" height="3" fill="#fff"/><rect x="1" y="3" width="12" height="1" fill="#0c0c9c"/><rect x="4" y="1" width="1" height="12" fill="#0c0c9c"/><rect x="8" y="4" width="1" height="9" fill="#000"/><rect x="5" y="6" width="8" height="1" fill="#000"/><rect x="5" y="9" width="8" height="1" fill="#000"/><rect x="1" y="6" width="3" height="1" fill="#0c0c9c"/><rect x="1" y="9" width="3" height="1" fill="#0c0c9c"/><rect x="8" y="1" width="1" height="2" fill="#0c0c9c"/></svg><div class="a" style="left:61px;top:626px;white-space:nowrap">0x8CD3 - 4x1 - 0x2E</div><div class="a" style="left:31px;top:648px;width:11px;height:1px;background:repeating-linear-gradient(90deg,#b0b0a8 0 1px,transparent 1px 2px)"></div><svg class="a" style="left:42px;top:641px" width="14" height="14" viewBox="0 0 14 14" shape-rendering="crispEdges"><rect x="0" y="0" width="14" height="14" fill="#0c0c9c"/><rect x="1" y="1" width="12" height="12" fill="#000"/><rect x="1" y="1" width="3" height="2" fill="#a4a8f4"/><rect x="1" y="4" width="3" height="2" fill="#a4a8f4"/><rect x="1" y="7" width="3" height="2" fill="#a4a8f4"/><rect x="1" y="10" width="3" height="3" fill="#a4a8f4"/><rect x="5" y="1" width="3" height="2" fill="#a4a8f4"/><rect x="5" y="4" width="3" height="2" fill="#fff"/><rect x="5" y="7" width="3" height="2" fill="#fff"/><rect x="5" y="10" width="3" height="3" fill="#fff"/><rect x="9" y="1" width="4" height="2" fill="#a4a8f4"/><rect x="9" y="4" width="4" height="2" fill="#fff"/><rect x="9" y="7" width="4" height="2" fill="#fff"/><rect x="9" y="10" width="4" height="3" fill="#fff"/><rect x="1" y="3" width="12" height="1" fill="#0c0c9c"/><rect x="4" y="1" width="1" height="12" fill="#0c0c9c"/><rect x="8" y="4" width="1" height="9" fill="#000"/><rect x="5" y="6" width="8" height="1" fill="#000"/><rect x="5" y="9" width="8" height="1" fill="#000"/><rect x="1" y="6" width="3" height="1" fill="#0c0c9c"/><rect x="1" y="9" width="3" height="1" fill="#0c0c9c"/><rect x="8" y="1" width="1" height="2" fill="#0c0c9c"/></svg><div class="a" style="left:61px;top:642px;white-space:nowrap">0x8CCC - 0x3A by 0x2E 5x4</div><div class="a" style="left:31px;top:664px;width:11px;height:1px;background:repeating-linear-gradient(90deg,#b0b0a8 0 1px,transparent 1px 2px)"></div><svg class="a" style="left:42px;top:657px" width="14" height="14" viewBox="0 0 14 14" shape-rendering="crispEdges"><rect x="0" y="0" width="14" height="14" fill="#0c0c9c"/><rect x="1" y="1" width="12" height="12" fill="#000"/><rect x="1" y="1" width="3" height="2" fill="#a4a8f4"/><rect x="1" y="4" width="3" height="2" fill="#a4a8f4"/><rect x="1" y="7" width="3" height="2" fill="#a4a8f4"/><rect x="1" y="10" width="3" height="3" fill="#a4a8f4"/><rect x="5" y="1" width="3" height="2" fill="#a4a8f4"/><rect x="5" y="4" width="3" height="2" fill="#fff"/><rect x="5" y="7" width="3" height="2" fill="#fff"/><rect x="5" y="10" width="3" height="3" fill="#fff"/><rect x="9" y="1" width="4" height="2" fill="#a4a8f4"/><rect x="9" y="4" width="4" height="2" fill="#fff"/><rect x="9" y="7" width="4" height="2" fill="#fff"/><rect x="9" y="10" width="4" height="3" fill="#fff"/><rect x="1" y="3" width="12" height="1" fill="#0c0c9c"/><rect x="4" y="1" width="1" height="12" fill="#0c0c9c"/><rect x="8" y="4" width="1" height="9" fill="#000"/><rect x="5" y="6" width="8" height="1" fill="#000"/><rect x="5" y="9" width="8" height="1" fill="#000"/><rect x="1" y="6" width="3" height="1" fill="#0c0c9c"/><rect x="1" y="9" width="3" height="1" fill="#0c0c9c"/><rect x="8" y="1" width="1" height="2" fill="#0c0c9c"/></svg><div class="a" style="left:61px;top:658px;white-space:nowrap">0x8CED - 5x1 - 0x3A</div><div class="a" style="left:31px;top:680px;width:11px;height:1px;background:repeating-linear-gradient(90deg,#b0b0a8 0 1px,transparent 1px 2px)"></div><svg class="a" style="left:42px;top:673px" width="14" height="14" viewBox="0 0 14 14" shape-rendering="crispEdges"><rect x="0" y="0" width="14" height="14" fill="#0c0c9c"/><rect x="1" y="1" width="12" height="12" fill="#000"/><rect x="1" y="1" width="3" height="2" fill="#a4a8f4"/><rect x="1" y="4" width="3" height="2" fill="#a4a8f4"/><rect x="1" y="7" width="3" height="2" fill="#a4a8f4"/><rect x="1" y="10" width="3" height="3" fill="#a4a8f4"/><rect x="5" y="1" width="3" height="2" fill="#a4a8f4"/><rect x="5" y="4" width="3" height="2" fill="#fff"/><rect x="5" y="7" width="3" height="2" fill="#fff"/><rect x="5" y="10" width="3" height="3" fill="#fff"/><rect x="9" y="1" width="4" height="2" fill="#a4a8f4"/><rect x="9" y="4" width="4" height="2" fill="#fff"/><rect x="9" y="7" width="4" height="2" fill="#fff"/><rect x="9" y="10" width="4" height="3" fill="#fff"/><rect x="1" y="3" width="12" height="1" fill="#0c0c9c"/><rect x="4" y="1" width="1" height="12" fill="#0c0c9c"/><rect x="8" y="4" width="1" height="9" fill="#000"/><rect x="5" y="6" width="8" height="1" fill="#000"/><rect x="5" y="9" width="8" height="1" fill="#000"/><rect x="1" y="6" width="3" height="1" fill="#0c0c9c"/><rect x="1" y="9" width="3" height="1" fill="#0c0c9c"/><rect x="8" y="1" width="1" height="2" fill="#0c0c9c"/></svg><div class="a" style="left:61px;top:674px;white-space:nowrap">0x8CED - 0x3A 5x1</div><div class="a" style="left:31px;top:696px;width:11px;height:1px;background:repeating-linear-gradient(90deg,#b0b0a8 0 1px,transparent 1px 2px)"></div><svg class="a" style="left:42px;top:689px" width="14" height="14" viewBox="0 0 14 14" shape-rendering="crispEdges"><rect x="0" y="0" width="14" height="14" fill="#0c0c9c"/><rect x="1" y="1" width="12" height="12" fill="#000"/><rect x="1" y="1" width="3" height="2" fill="#a4a8f4"/><rect x="1" y="4" width="3" height="2" fill="#a4a8f4"/><rect x="1" y="7" width="3" height="2" fill="#a4a8f4"/><rect x="1" y="10" width="3" height="3" fill="#a4a8f4"/><rect x="5" y="1" width="3" height="2" fill="#a4a8f4"/><rect x="5" y="4" width="3" height="2" fill="#fff"/><rect x="5" y="7" width="3" height="2" fill="#fff"/><rect x="5" y="10" width="3" height="3" fill="#fff"/><rect x="9" y="1" width="4" height="2" fill="#a4a8f4"/><rect x="9" y="4" width="4" height="2" fill="#fff"/><rect x="9" y="7" width="4" height="2" fill="#fff"/><rect x="9" y="10" width="4" height="3" fill="#fff"/><rect x="1" y="3" width="12" height="1" fill="#0c0c9c"/><rect x="4" y="1" width="1" height="12" fill="#0c0c9c"/><rect x="8" y="4" width="1" height="9" fill="#000"/><rect x="5" y="6" width="8" height="1" fill="#000"/><rect x="5" y="9" width="8" height="1" fill="#000"/><rect x="1" y="6" width="3" height="1" fill="#0c0c9c"/><rect x="1" y="9" width="3" height="1" fill="#0c0c9c"/><rect x="8" y="1" width="1" height="2" fill="#0c0c9c"/></svg><div class="a" style="left:61px;top:690px;white-space:nowrap">0x8CF9 - 4x1 - 0x2E</div><div class="a" style="left:31px;top:712px;width:11px;height:1px;background:repeating-linear-gradient(90deg,#b0b0a8 0 1px,transparent 1px 2px)"></div><svg class="a" style="left:42px;top:705px" width="14" height="14" viewBox="0 0 14 14" shape-rendering="crispEdges"><rect x="0" y="0" width="14" height="14" fill="#0c0c9c"/><rect x="1" y="1" width="12" height="12" fill="#000"/><rect x="1" y="1" width="3" height="2" fill="#a4a8f4"/><rect x="1" y="4" width="3" height="2" fill="#a4a8f4"/><rect x="1" y="7" width="3" height="2" fill="#a4a8f4"/><rect x="1" y="10" width="3" height="3" fill="#a4a8f4"/><rect x="5" y="1" width="3" height="2" fill="#a4a8f4"/><rect x="5" y="4" width="3" height="2" fill="#fff"/><rect x="5" y="7" width="3" height="2" fill="#fff"/><rect x="5" y="10" width="3" height="3" fill="#fff"/><rect x="9" y="1" width="4" height="2" fill="#a4a8f4"/><rect x="9" y="4" width="4" height="2" fill="#fff"/><rect x="9" y="7" width="4" height="2" fill="#fff"/><rect x="9" y="10" width="4" height="3" fill="#fff"/><rect x="1" y="3" width="12" height="1" fill="#0c0c9c"/><rect x="4" y="1" width="1" height="12" fill="#0c0c9c"/><rect x="8" y="4" width="1" height="9" fill="#000"/><rect x="5" y="6" width="8" height="1" fill="#000"/><rect x="5" y="9" width="8" height="1" fill="#000"/><rect x="1" y="6" width="3" height="1" fill="#0c0c9c"/><rect x="1" y="9" width="3" height="1" fill="#0c0c9c"/><rect x="8" y="1" width="1" height="2" fill="#0c0c9c"/></svg><div class="a" style="left:61px;top:706px;white-space:nowrap">0x8CF9 - 0x2E 4x1</div><div class="a" style="left:31px;top:728px;width:11px;height:1px;background:repeating-linear-gradient(90deg,#b0b0a8 0 1px,transparent 1px 2px)"></div><svg class="a" style="left:42px;top:721px" width="14" height="14" viewBox="0 0 14 14" shape-rendering="crispEdges"><rect x="0" y="0" width="14" height="14" fill="#0c0c9c"/><rect x="1" y="1" width="12" height="12" fill="#000"/><rect x="1" y="1" width="3" height="2" fill="#a4a8f4"/><rect x="1" y="4" width="3" height="2" fill="#a4a8f4"/><rect x="1" y="7" width="3" height="2" fill="#a4a8f4"/><rect x="1" y="10" width="3" height="3" fill="#a4a8f4"/><rect x="5" y="1" width="3" height="2" fill="#a4a8f4"/><rect x="5" y="4" width="3" height="2" fill="#fff"/><rect x="5" y="7" width="3" height="2" fill="#fff"/><rect x="5" y="10" width="3" height="3" fill="#fff"/><rect x="9" y="1" width="4" height="2" fill="#a4a8f4"/><rect x="9" y="4" width="4" height="2" fill="#fff"/><rect x="9" y="7" width="4" height="2" fill="#fff"/><rect x="9" y="10" width="4" height="3" fill="#fff"/><rect x="1" y="3" width="12" height="1" fill="#0c0c9c"/><rect x="4" y="1" width="1" height="12" fill="#0c0c9c"/><rect x="8" y="4" width="1" height="9" fill="#000"/><rect x="5" y="6" width="8" height="1" fill="#000"/><rect x="5" y="9" width="8" height="1" fill="#000"/><rect x="1" y="6" width="3" height="1" fill="#0c0c9c"/><rect x="1" y="9" width="3" height="1" fill="#0c0c9c"/><rect x="8" y="1" width="1" height="2" fill="#0c0c9c"/></svg><div class="a" style="left:61px;top:722px;white-space:nowrap">0x8D03 - 4x1 - 0x3A</div><div class="a" style="left:31px;top:744px;width:11px;height:1px;background:repeating-linear-gradient(90deg,#b0b0a8 0 1px,transparent 1px 2px)"></div><svg class="a" style="left:42px;top:737px" width="14" height="14" viewBox="0 0 14 14" shape-rendering="crispEdges"><rect x="0" y="0" width="14" height="14" fill="#0c0c9c"/><rect x="1" y="1" width="12" height="12" fill="#000"/><rect x="1" y="1" width="3" height="2" fill="#a4a8f4"/><rect x="1" y="4" width="3" height="2" fill="#a4a8f4"/><rect x="1" y="7" width="3" height="2" fill="#a4a8f4"/><rect x="1" y="10" width="3" height="3" fill="#a4a8f4"/><rect x="5" y="1" width="3" height="2" fill="#a4a8f4"/><rect x="5" y="4" width="3" height="2" fill="#fff"/><rect x="5" y="7" width="3" height="2" fill="#fff"/><rect x="5" y="10" width="3" height="3" fill="#fff"/><rect x="9" y="1" width="4" height="2" fill="#a4a8f4"/><rect x="9" y="4" width="4" height="2" fill="#fff"/><rect x="9" y="7" width="4" height="2" fill="#fff"/><rect x="9" y="10" width="4" height="3" fill="#fff"/><rect x="1" y="3" width="12" height="1" fill="#0c0c9c"/><rect x="4" y="1" width="1" height="12" fill="#0c0c9c"/><rect x="8" y="4" width="1" height="9" fill="#000"/><rect x="5" y="6" width="8" height="1" fill="#000"/><rect x="5" y="9" width="8" height="1" fill="#000"/><rect x="1" y="6" width="3" height="1" fill="#0c0c9c"/><rect x="1" y="9" width="3" height="1" fill="#0c0c9c"/><rect x="8" y="1" width="1" height="2" fill="#0c0c9c"/></svg><div class="a" style="left:61px;top:738px;white-space:nowrap">0x8D03 - 0x3A 4x1</div><div class="a" style="left:31px;top:760px;width:11px;height:1px;background:repeating-linear-gradient(90deg,#b0b0a8 0 1px,transparent 1px 2px)"></div><svg class="a" style="left:42px;top:753px" width="14" height="14" viewBox="0 0 14 14" shape-rendering="crispEdges"><rect x="0" y="0" width="14" height="14" fill="#0c0c9c"/><rect x="1" y="1" width="12" height="12" fill="#000"/><rect x="1" y="1" width="3" height="2" fill="#a4a8f4"/><rect x="1" y="4" width="3" height="2" fill="#a4a8f4"/><rect x="1" y="7" width="3" height="2" fill="#a4a8f4"/><rect x="1" y="10" width="3" height="3" fill="#a4a8f4"/><rect x="5" y="1" width="3" height="2" fill="#a4a8f4"/><rect x="5" y="4" width="3" height="2" fill="#fff"/><rect x="5" y="7" width="3" height="2" fill="#fff"/><rect x="5" y="10" width="3" height="3" fill="#fff"/><rect x="9" y="1" width="4" height="2" fill="#a4a8f4"/><rect x="9" y="4" width="4" height="2" fill="#fff"/><rect x="9" y="7" width="4" height="2" fill="#fff"/><rect x="9" y="10" width="4" height="3" fill="#fff"/><rect x="1" y="3" width="12" height="1" fill="#0c0c9c"/><rect x="4" y="1" width="1" height="12" fill="#0c0c9c"/><rect x="8" y="4" width="1" height="9" fill="#000"/><rect x="5" y="6" width="8" height="1" fill="#000"/><rect x="5" y="9" width="8" height="1" fill="#000"/><rect x="1" y="6" width="3" height="1" fill="#0c0c9c"/><rect x="1" y="9" width="3" height="1" fill="#0c0c9c"/><rect x="8" y="1" width="1" height="2" fill="#0c0c9c"/></svg><div class="a" style="left:61px;top:754px;white-space:nowrap">0x8D0D - 5x1 - 0x36</div><div class="a" style="left:31px;top:776px;width:11px;height:1px;background:repeating-linear-gradient(90deg,#b0b0a8 0 1px,transparent 1px 2px)"></div><svg class="a" style="left:42px;top:769px" width="14" height="14" viewBox="0 0 14 14" shape-rendering="crispEdges"><rect x="0" y="0" width="14" height="14" fill="#0c0c9c"/><rect x="1" y="1" width="12" height="12" fill="#000"/><rect x="1" y="1" width="3" height="2" fill="#a4a8f4"/><rect x="1" y="4" width="3" height="2" fill="#a4a8f4"/><rect x="1" y="7" width="3" height="2" fill="#a4a8f4"/><rect x="1" y="10" width="3" height="3" fill="#a4a8f4"/><rect x="5" y="1" width="3" height="2" fill="#a4a8f4"/><rect x="5" y="4" width="3" height="2" fill="#fff"/><rect x="5" y="7" width="3" height="2" fill="#fff"/><rect x="5" y="10" width="3" height="3" fill="#fff"/><rect x="9" y="1" width="4" height="2" fill="#a4a8f4"/><rect x="9" y="4" width="4" height="2" fill="#fff"/><rect x="9" y="7" width="4" height="2" fill="#fff"/><rect x="9" y="10" width="4" height="3" fill="#fff"/><rect x="1" y="3" width="12" height="1" fill="#0c0c9c"/><rect x="4" y="1" width="1" height="12" fill="#0c0c9c"/><rect x="8" y="4" width="1" height="9" fill="#000"/><rect x="5" y="6" width="8" height="1" fill="#000"/><rect x="5" y="9" width="8" height="1" fill="#000"/><rect x="1" y="6" width="3" height="1" fill="#0c0c9c"/><rect x="1" y="9" width="3" height="1" fill="#0c0c9c"/><rect x="8" y="1" width="1" height="2" fill="#0c0c9c"/></svg><div class="a" style="left:61px;top:770px;white-space:nowrap">0x8D0D - 0x36 5x1</div><div class="a" style="left:31px;top:792px;width:11px;height:1px;background:repeating-linear-gradient(90deg,#b0b0a8 0 1px,transparent 1px 2px)"></div><svg class="a" style="left:42px;top:785px" width="14" height="14" viewBox="0 0 14 14" shape-rendering="crispEdges"><rect x="0" y="0" width="14" height="14" fill="#0c0c9c"/><rect x="1" y="1" width="12" height="12" fill="#000"/><rect x="1" y="1" width="3" height="2" fill="#a4a8f4"/><rect x="1" y="4" width="3" height="2" fill="#a4a8f4"/><rect x="1" y="7" width="3" height="2" fill="#a4a8f4"/><rect x="1" y="10" width="3" height="3" fill="#a4a8f4"/><rect x="5" y="1" width="3" height="2" fill="#a4a8f4"/><rect x="5" y="4" width="3" height="2" fill="#fff"/><rect x="5" y="7" width="3" height="2" fill="#fff"/><rect x="5" y="10" width="3" height="3" fill="#fff"/><rect x="9" y="1" width="4" height="2" fill="#a4a8f4"/><rect x="9" y="4" width="4" height="2" fill="#fff"/><rect x="9" y="7" width="4" height="2" fill="#fff"/><rect x="9" y="10" width="4" height="3" fill="#fff"/><rect x="1" y="3" width="12" height="1" fill="#0c0c9c"/><rect x="4" y="1" width="1" height="12" fill="#0c0c9c"/><rect x="8" y="4" width="1" height="9" fill="#000"/><rect x="5" y="6" width="8" height="1" fill="#000"/><rect x="5" y="9" width="8" height="1" fill="#000"/><rect x="1" y="6" width="3" height="1" fill="#0c0c9c"/><rect x="1" y="9" width="3" height="1" fill="#0c0c9c"/><rect x="8" y="1" width="1" height="2" fill="#0c0c9c"/></svg><div class="a" style="left:61px;top:786px;white-space:nowrap">0x8D19 - 6x1 - 0x3A</div><div class="a" style="left:31px;top:808px;width:11px;height:1px;background:repeating-linear-gradient(90deg,#b0b0a8 0 1px,transparent 1px 2px)"></div><svg class="a" style="left:42px;top:801px" width="14" height="14" viewBox="0 0 14 14" shape-rendering="crispEdges"><rect x="0" y="0" width="14" height="14" fill="#0c0c9c"/><rect x="1" y="1" width="12" height="12" fill="#000"/><rect x="1" y="1" width="3" height="2" fill="#a4a8f4"/><rect x="1" y="4" width="3" height="2" fill="#a4a8f4"/><rect x="1" y="7" width="3" height="2" fill="#a4a8f4"/><rect x="1" y="10" width="3" height="3" fill="#a4a8f4"/><rect x="5" y="1" width="3" height="2" fill="#a4a8f4"/><rect x="5" y="4" width="3" height="2" fill="#fff"/><rect x="5" y="7" width="3" height="2" fill="#fff"/><rect x="5" y="10" width="3" height="3" fill="#fff"/><rect x="9" y="1" width="4" height="2" fill="#a4a8f4"/><rect x="9" y="4" width="4" height="2" fill="#fff"/><rect x="9" y="7" width="4" height="2" fill="#fff"/><rect x="9" y="10" width="4" height="3" fill="#fff"/><rect x="1" y="3" width="12" height="1" fill="#0c0c9c"/><rect x="4" y="1" width="1" height="12" fill="#0c0c9c"/><rect x="8" y="4" width="1" height="9" fill="#000"/><rect x="5" y="6" width="8" height="1" fill="#000"/><rect x="5" y="9" width="8" height="1" fill="#000"/><rect x="1" y="6" width="3" height="1" fill="#0c0c9c"/><rect x="1" y="9" width="3" height="1" fill="#0c0c9c"/><rect x="8" y="1" width="1" height="2" fill="#0c0c9c"/></svg><div class="a" style="left:61px;top:802px;white-space:nowrap">0x8D21 - 4x1 - 0x3F</div><div class="a" style="left:31px;top:824px;width:11px;height:1px;background:repeating-linear-gradient(90deg,#b0b0a8 0 1px,transparent 1px 2px)"></div><svg class="a" style="left:42px;top:817px" width="14" height="14" viewBox="0 0 14 14" shape-rendering="crispEdges"><rect x="0" y="0" width="14" height="14" fill="#0c0c9c"/><rect x="1" y="1" width="12" height="12" fill="#000"/><rect x="1" y="1" width="3" height="2" fill="#a4a8f4"/><rect x="1" y="4" width="3" height="2" fill="#a4a8f4"/><rect x="1" y="7" width="3" height="2" fill="#a4a8f4"/><rect x="1" y="10" width="3" height="3" fill="#a4a8f4"/><rect x="5" y="1" width="3" height="2" fill="#a4a8f4"/><rect x="5" y="4" width="3" height="2" fill="#fff"/><rect x="5" y="7" width="3" height="2" fill="#fff"/><rect x="5" y="10" width="3" height="3" fill="#fff"/><rect x="9" y="1" width="4" height="2" fill="#a4a8f4"/><rect x="9" y="4" width="4" height="2" fill="#fff"/><rect x="9" y="7" width="4" height="2" fill="#fff"/><rect x="9" y="10" width="4" height="3" fill="#fff"/><rect x="1" y="3" width="12" height="1" fill="#0c0c9c"/><rect x="4" y="1" width="1" height="12" fill="#0c0c9c"/><rect x="8" y="4" width="1" height="9" fill="#000"/><rect x="5" y="6" width="8" height="1" fill="#000"/><rect x="5" y="9" width="8" height="1" fill="#000"/><rect x="1" y="6" width="3" height="1" fill="#0c0c9c"/><rect x="1" y="9" width="3" height="1" fill="#0c0c9c"/><rect x="8" y="1" width="1" height="2" fill="#0c0c9c"/></svg><div class="a" style="left:61px;top:818px;white-space:nowrap">0x8D19 - 0x3A by 0x3F 6x4</div><div class="a" style="left:31px;top:840px;width:11px;height:1px;background:repeating-linear-gradient(90deg,#b0b0a8 0 1px,transparent 1px 2px)"></div><svg class="a" style="left:42px;top:833px" width="14" height="14" viewBox="0 0 14 14" shape-rendering="crispEdges"><rect x="0" y="0" width="14" height="14" fill="#0c0c9c"/><rect x="1" y="1" width="12" height="12" fill="#000"/><rect x="1" y="1" width="3" height="2" fill="#a4a8f4"/><rect x="1" y="4" width="3" height="2" fill="#a4a8f4"/><rect x="1" y="7" width="3" height="2" fill="#a4a8f4"/><rect x="1" y="10" width="3" height="3" fill="#a4a8f4"/><rect x="5" y="1" width="3" height="2" fill="#a4a8f4"/><rect x="5" y="4" width="3" height="2" fill="#fff"/><rect x="5" y="7" width="3" height="2" fill="#fff"/><rect x="5" y="10" width="3" height="3" fill="#fff"/><rect x="9" y="1" width="4" height="2" fill="#a4a8f4"/><rect x="9" y="4" width="4" height="2" fill="#fff"/><rect x="9" y="7" width="4" height="2" fill="#fff"/><rect x="9" y="10" width="4" height="3" fill="#fff"/><rect x="1" y="3" width="12" height="1" fill="#0c0c9c"/><rect x="4" y="1" width="1" height="12" fill="#0c0c9c"/><rect x="8" y="4" width="1" height="9" fill="#000"/><rect x="5" y="6" width="8" height="1" fill="#000"/><rect x="5" y="9" width="8" height="1" fill="#000"/><rect x="1" y="6" width="3" height="1" fill="#0c0c9c"/><rect x="1" y="9" width="3" height="1" fill="#0c0c9c"/><rect x="8" y="1" width="1" height="2" fill="#0c0c9c"/></svg><div class="a" style="left:61px;top:834px;white-space:nowrap">0x8D3F - 3x1 - 0x3A</div><div class="a" style="left:31px;top:856px;width:11px;height:1px;background:repeating-linear-gradient(90deg,#b0b0a8 0 1px,transparent 1px 2px)"></div><svg class="a" style="left:42px;top:849px" width="14" height="14" viewBox="0 0 14 14" shape-rendering="crispEdges"><rect x="0" y="0" width="14" height="14" fill="#0c0c9c"/><rect x="1" y="1" width="12" height="12" fill="#000"/><rect x="1" y="1" width="3" height="2" fill="#a4a8f4"/><rect x="1" y="4" width="3" height="2" fill="#a4a8f4"/><rect x="1" y="7" width="3" height="2" fill="#a4a8f4"/><rect x="1" y="10" width="3" height="3" fill="#a4a8f4"/><rect x="5" y="1" width="3" height="2" fill="#a4a8f4"/><rect x="5" y="4" width="3" height="2" fill="#fff"/><rect x="5" y="7" width="3" height="2" fill="#fff"/><rect x="5" y="10" width="3" height="3" fill="#fff"/><rect x="9" y="1" width="4" height="2" fill="#a4a8f4"/><rect x="9" y="4" width="4" height="2" fill="#fff"/><rect x="9" y="7" width="4" height="2" fill="#fff"/><rect x="9" y="10" width="4" height="3" fill="#fff"/><rect x="1" y="3" width="12" height="1" fill="#0c0c9c"/><rect x="4" y="1" width="1" height="12" fill="#0c0c9c"/><rect x="8" y="4" width="1" height="9" fill="#000"/><rect x="5" y="6" width="8" height="1" fill="#000"/><rect x="5" y="9" width="8" height="1" fill="#000"/><rect x="1" y="6" width="3" height="1" fill="#0c0c9c"/><rect x="1" y="9" width="3" height="1" fill="#0c0c9c"/><rect x="8" y="1" width="1" height="2" fill="#0c0c9c"/></svg><div class="a" style="left:61px;top:850px;white-space:nowrap">0x8D45 - 3x1 - 0x3F</div></div><div class="a" style="left:378px;top:43px;width:17px;height:852px;background:#fcfcfe;border-left:1px solid #eeede5"></div><div class="a" style="left:380px;top:44px;width:15px;height:15px;border-radius:2px;border:1px solid #c3d3fd;background:linear-gradient(135deg,#dfe8fd,#c6d5fb 60%,#b7c9f7)"><svg class="a" style="left:-1px;top:-1px" width="15" height="15" viewBox="0 0 15 15"><path d="M4.0 9.5 L7.5 6.0 L11.0 9.5" stroke="#4d6185" stroke-width="2" fill="none"/></svg></div><div class="a" style="left:380px;top:880px;width:15px;height:15px;border-radius:2px;border:1px solid #c3d3fd;background:linear-gradient(135deg,#dfe8fd,#c6d5fb 60%,#b7c9f7)"><svg class="a" style="left:-1px;top:-1px" width="15" height="15" viewBox="0 0 15 15"><path d="M4.0 5.5 L7.5 9.0 L11.0 5.5" stroke="#4d6185" stroke-width="2" fill="none"/></svg></div><div class="a" style="left:380px;top:61px;width:15px;height:135px;border:1px solid #b4c8f6;border-radius:2px;background:linear-gradient(90deg,#c9d8fc,#bccefa 50%,#b0c4f6)"><div class="a" style="left:4px;top:62px;width:6px;height:1px;background:#8ea6e6"></div><div class="a" style="left:4px;top:64px;width:6px;height:1px;background:#8ea6e6"></div><div class="a" style="left:4px;top:66px;width:6px;height:1px;background:#8ea6e6"></div><div class="a" style="left:4px;top:68px;width:6px;height:1px;background:#8ea6e6"></div></div></div><div id="child" class="a" style="left:399px;top:71px;width:819px;height:386px;background:#0054e3;border-radius:7px 7px 0 0;overflow:hidden"><div class="a" style="left:0;top:0;width:819px;height:30px;background:linear-gradient(#1a50a8 0px,#3c90f8 1px,#3a8cf6 2.5px,#0a64e0 5px,#0054e0 8px,#0054e0 17px,#0066f8 20px,#0066f8 26px,#0050e0 28px,#0038a8 30px)"></div><div class="a" style="left:0;top:30px;width:1px;height:356px;background:#0020a0"></div><div class="a" style="left:3px;top:30px;width:1px;height:351px;background:#3a7af0"></div><div class="a" style="left:818px;top:30px;width:1px;height:356px;background:#00188c"></div><div class="a" style="left:0;top:382px;width:819px;height:4px;background:linear-gradient(#0050dc,#00209c)"></div><svg class="a" style="left:6px;top:10px" width="15" height="12" viewBox="0 0 15 12"><rect x="1.00" y="0" width="1.02" height="3" fill="#333"/><rect x="1.00" y="9" width="1.02" height="3" fill="#333"/><rect x="2.86" y="0" width="1.02" height="3" fill="#333"/><rect x="2.86" y="9" width="1.02" height="3" fill="#333"/><rect x="4.71" y="0" width="1.02" height="3" fill="#333"/><rect x="4.71" y="9" width="1.02" height="3" fill="#333"/><rect x="6.57" y="0" width="1.02" height="3" fill="#333"/><rect x="6.57" y="9" width="1.02" height="3" fill="#333"/><rect x="8.43" y="0" width="1.02" height="3" fill="#333"/><rect x="8.43" y="9" width="1.02" height="3" fill="#333"/><rect x="10.29" y="0" width="1.02" height="3" fill="#333"/><rect x="10.29" y="9" width="1.02" height="3" fill="#333"/><rect x="12.14" y="0" width="1.02" height="3" fill="#333"/><rect x="12.14" y="9" width="1.02" height="3" fill="#333"/><rect x="0" y="2.5" width="15" height="7" fill="#0a0a0a"/></svg><div class="a" style="left:25px;top:9px;color:#fff;font-weight:bold;font-size:13px;letter-spacing:-0.1px;text-shadow:1px 1px 0 #0a2a8a;white-space:nowrap">Driving Ignition (BTDC)</div><div class="a" style="left:792px;top:6px;width:21px;height:21px;border:1px solid #fff;border-radius:3px;background:radial-gradient(circle at 30% 25%, #f4a08a 0%, #e46b4c 35%, #d9502c 70%, #c4401e 100%)"><svg class="a" style="left:0;top:0" width="19" height="19" viewBox="0 0 19 19"><path d="M5.5 5 L13.5 14 M13.5 5 L5.5 14" stroke="#fff" stroke-width="2.2" stroke-linecap="square"/></svg></div><div class="a" style="left:4px;top:30px;width:811px;height:352px;background:#ece9d8"><div class="a" style="left:0;top:0;width:811px;height:1px;background:#fff"></div><div class="a grip" style="left:3px;top:3px;height:21px"></div><div class="a sep" style="left:196px;top:3px;height:21px"></div><div class="a" style="left:102px;top:2px;width:22px;height:22px;border:1px solid #c0cfe8;border-radius:3px;background:#fcfcfb"></div><svg class="a" style="left:13px;top:4px" width="16" height="16" viewBox="0 0 16 16" shape-rendering="crispEdges"><rect x="1.5" y="1.5" width="13" height="13" fill="#848453" stroke="#000"/><rect x="4" y="2" width="8" height="5" fill="#f4f4f4"/><rect x="4" y="9" width="8" height="5" fill="#000"/><rect x="9" y="10" width="2" height="3" fill="#fff"/></svg><svg class="a" style="left:37px;top:5px" width="16" height="16" viewBox="0 0 16 16" shape-rendering="crispEdges"><path d="M2 2L12 13M12 2L2 13" stroke="#e00000" stroke-width="2.2" fill="none" shape-rendering="auto"/></svg><svg class="a" style="left:58px;top:4px" width="16" height="16" viewBox="0 0 16 16" shape-rendering="crispEdges"><path d="M1 2v12h15" stroke="#000" stroke-dasharray="1 1" fill="none"/><path d="M2 8l2 2 3-3 2 3 3-3 2 2" stroke="#e00000" stroke-width="1.3" fill="none" shape-rendering="auto"/></svg><svg class="a" style="left:81px;top:4px" width="16" height="16" viewBox="0 0 16 16" shape-rendering="crispEdges"><rect x="7" y="1" width="2" height="13" fill="#000"/><rect x="3" y="14" width="10" height="2" fill="#000"/><rect x="2" y="3" width="12" height="1" fill="#000"/><path d="M3 4l-2.5 5M3 4l2.5 5M13 4l-2.5 5M13 4l2.5 5" stroke="#000" stroke-width="0.8" shape-rendering="auto"/><path d="M0 9h6q-1 3-3 3t-3-3z" fill="#ffff60" stroke="#000" stroke-width="0.8" shape-rendering="auto"/><path d="M10 9h6q-1 3-3 3t-3-3z" fill="#ffff60" stroke="#000" stroke-width="0.8" shape-rendering="auto"/></svg><svg class="a" style="left:105px;top:4px" width="16" height="16" viewBox="0 0 16 16" shape-rendering="crispEdges"><path d="M7.5 2L3 13h10z" fill="none" stroke="#0000a0" stroke-width="2" shape-rendering="auto"/><rect x="1" y="12" width="14" height="2" fill="#000"/><rect x="2" y="1" width="11" height="2" fill="#0000a0"/><path d="M9 4L5 12" stroke="#000" stroke-width="1.5" shape-rendering="auto"/></svg><svg class="a" style="left:127px;top:5px" width="16" height="16" viewBox="0 0 16 16" shape-rendering="crispEdges"><path d="M1 1l8 9M9 1L1 10" stroke="#000080" stroke-width="2.2" fill="none" shape-rendering="auto"/><path d="M5 14h11l-5-4z" fill="#e00000" shape-rendering="auto"/></svg><svg class="a" style="left:151px;top:4px" width="16" height="16" viewBox="0 0 16 16" shape-rendering="crispEdges"><path d="M1 2l4 5 4-5M5 7v7" stroke="#000080" stroke-width="2.2" fill="none" shape-rendering="auto"/><path d="M12 4v11" stroke="#e00000" stroke-width="2" shape-rendering="auto"/><path d="M8 7l4-5 4 5z" fill="#e00000" shape-rendering="auto"/></svg><div class="a" style="left:207px;top:6px">Function:</div><div class="a" style="left:256px;top:2px;width:93px;height:21px;background:#fff;border:1px solid #7f9db9"></div><div class="a" style="left:260px;top:7px">Offset (+/-)</div><div class="a" style="left:332px;top:4px;width:16px;height:17px;border-radius:2px;border:1px solid #c3d3fd;background:linear-gradient(135deg,#dfe8fd,#c6d5fb 60%,#b7c9f7)"><svg class="a" style="left:-1px;top:-1px" width="16" height="17" viewBox="0 0 16 17"><path d="M4.5 6.5 L8.0 10.0 L11.5 6.5" stroke="#4d6185" stroke-width="2" fill="none"/></svg></div><div class="a" style="left:354px;top:6px">Value:</div><div class="a" style="left:387px;top:3px;width:48px;height:20px;background:#fff;border:1px solid #7f9db9"></div><div class="a" style="left:391px;top:7px">1.0</div><div class="a" style="left:437px;top:3px;width:49px;height:20px;border:1px solid #003c74;border-radius:3px;background:linear-gradient(#fff,#f4f3ee 60%,#dcd8c8)"><div class="a" style="left:4px;top:3px">Execute</div></div><div class="a" style="left:0;top:26px;width:811px;height:1px;background:#a7a592"></div><div class="a" style="left:0;top:26px;width:811px;height:303px;background:#808080;border-top:1px solid #716f64;border-left:1px solid #716f64;border-right:2px solid #fff;border-bottom:2px solid #fff;overflow:hidden"><div class="a" style="left:1px;top:0;width:807px;height:15px;background:#ece9d8;border:1px solid #aca899;border-top-color:#fff;border-left-color:#fff"></div><div class="a" style="left:1px;top:0;width:807px;height:15px;overflow:hidden"><div class="a" style="left:0;top:1px;width:807px;text-align:center;font-weight:bold;font-size:12px;letter-spacing:-0.1px;padding-left:0px">Driving Ignition (BTDC)</div></div><div class="a" style="left:1px;top:15px;width:807px;height:1px;background:#fff"></div><div class="a" style="left:1px;top:16px;width:782px;height:15px;background:#fff"></div><div class="a" style="left:1px;top:16px;width:45px;height:14px;background:#ece9d8;border:1px solid #b0ad9c;text-align:center;line-height:13px;padding-right:3px;white-space:nowrap"></div><div class="a" style="left:47px;top:16px;width:45px;height:14px;background:#dcdcdc;border:1px solid #b0ad9c;text-align:center;line-height:13px;padding-top:2px;white-space:nowrap">12.0</div><div class="a" style="left:93px;top:16px;width:45px;height:14px;background:#ece9d8;border:1px solid #b0ad9c;text-align:center;line-height:13px;padding-top:2px;white-space:nowrap">21.0</div><div class="a" style="left:139px;top:16px;width:45px;height:14px;background:#ece9d8;border:1px solid #b0ad9c;text-align:center;line-height:13px;padding-top:2px;white-space:nowrap">29.0</div><div class="a" style="left:185px;top:16px;width:45px;height:14px;background:#ece9d8;border:1px solid #b0ad9c;text-align:center;line-height:13px;padding-top:2px;white-space:nowrap">38.0</div><div class="a" style="left:231px;top:16px;width:45px;height:14px;background:#ece9d8;border:1px solid #b0ad9c;text-align:center;line-height:13px;padding-top:2px;white-space:nowrap">46.0</div><div class="a" style="left:277px;top:16px;width:45px;height:14px;background:#ece9d8;border:1px solid #b0ad9c;text-align:center;line-height:13px;padding-top:2px;white-space:nowrap">57.0</div><div class="a" style="left:323px;top:16px;width:45px;height:14px;background:#ece9d8;border:1px solid #b0ad9c;text-align:center;line-height:13px;padding-top:2px;white-space:nowrap">67.0</div><div class="a" style="left:369px;top:16px;width:45px;height:14px;background:#ece9d8;border:1px solid #b0ad9c;text-align:center;line-height:13px;padding-top:2px;white-space:nowrap">77.0</div><div class="a" style="left:415px;top:16px;width:45px;height:14px;background:#ece9d8;border:1px solid #b0ad9c;text-align:center;line-height:13px;padding-top:2px;white-space:nowrap">86.0</div><div class="a" style="left:461px;top:16px;width:45px;height:14px;background:#ece9d8;border:1px solid #b0ad9c;text-align:center;line-height:13px;padding-top:2px;white-space:nowrap">94.0</div><div class="a" style="left:507px;top:16px;width:45px;height:14px;background:#ece9d8;border:1px solid #b0ad9c;text-align:center;line-height:13px;padding-top:2px;white-space:nowrap">103.0</div><div class="a" style="left:553px;top:16px;width:45px;height:14px;background:#ece9d8;border:1px solid #b0ad9c;text-align:center;line-height:13px;padding-top:2px;white-space:nowrap">112.0</div><div class="a" style="left:599px;top:16px;width:45px;height:14px;background:#ece9d8;border:1px solid #b0ad9c;text-align:center;line-height:13px;padding-top:2px;white-space:nowrap">120.0</div><div class="a" style="left:645px;top:16px;width:45px;height:14px;background:#ece9d8;border:1px solid #b0ad9c;text-align:center;line-height:13px;padding-top:2px;white-space:nowrap">132.0</div><div class="a" style="left:691px;top:16px;width:45px;height:14px;background:#ece9d8;border:1px solid #b0ad9c;text-align:center;line-height:13px;padding-top:2px;white-space:nowrap">149.0</div><div class="a" style="left:737px;top:16px;width:45px;height:14px;background:#ece9d8;border:1px solid #b0ad9c;text-align:center;line-height:13px;padding-top:2px;white-space:nowrap">177.0</div><div class="a" style="left:46px;top:30px;width:737px;height:241px;background:#e4dde2"></div><div class="a" style="left:1px;top:30px;width:46px;height:241px;background:#fff"></div><div class="a" style="left:1px;top:31px;width:45px;height:14px;background:#dcdcdc;border:1px solid #b0ad9c;text-align:right;line-height:13px;padding-right:3px;white-space:nowrap">600</div><div class="a" style="left:47px;top:31px;width:45px;height:14px;background:#9feaec;outline:1px solid #202020;outline-offset:-1px;background:#a8cccc;text-align:right;padding-right:1px;line-height:15px">12.00</div><div class="a" style="left:93px;top:31px;width:45px;height:14px;background:#a0e9eb;text-align:right;padding-right:1px;line-height:15px">12.75</div><div class="a" style="left:139px;top:31px;width:45px;height:14px;background:#a0e9eb;text-align:right;padding-right:1px;line-height:15px">12.75</div><div class="a" style="left:185px;top:31px;width:45px;height:14px;background:#a0e9eb;text-align:right;padding-right:1px;line-height:15px">12.75</div><div class="a" style="left:231px;top:31px;width:45px;height:14px;background:#a0e9eb;text-align:right;padding-right:1px;line-height:15px">12.75</div><div class="a" style="left:277px;top:31px;width:45px;height:14px;background:#a0e9eb;text-align:right;padding-right:1px;line-height:15px">12.75</div><div class="a" style="left:323px;top:31px;width:45px;height:14px;background:#a0e9eb;text-align:right;padding-right:1px;line-height:15px">12.75</div><div class="a" style="left:369px;top:31px;width:45px;height:14px;background:#9deef0;text-align:right;padding-right:1px;line-height:15px">9.75</div><div class="a" style="left:415px;top:31px;width:45px;height:14px;background:#9deef0;text-align:right;padding-right:1px;line-height:15px">9.75</div><div class="a" style="left:461px;top:31px;width:45px;height:14px;background:#9deff1;text-align:right;padding-right:1px;line-height:15px">9.00</div><div class="a" style="left:507px;top:31px;width:45px;height:14px;background:#9deff1;text-align:right;padding-right:1px;line-height:15px">9.00</div><div class="a" style="left:553px;top:31px;width:45px;height:14px;background:#9deff1;text-align:right;padding-right:1px;line-height:15px">9.00</div><div class="a" style="left:599px;top:31px;width:45px;height:14px;background:#9deff1;text-align:right;padding-right:1px;line-height:15px">9.00</div><div class="a" style="left:645px;top:31px;width:45px;height:14px;background:#9deff1;text-align:right;padding-right:1px;line-height:15px">9.00</div><div class="a" style="left:691px;top:31px;width:45px;height:14px;background:#9deff1;text-align:right;padding-right:1px;line-height:15px">9.00</div><div class="a" style="left:737px;top:31px;width:45px;height:14px;background:#9deff1;text-align:right;padding-right:1px;line-height:15px">9.00</div><div class="a" style="left:1px;top:46px;width:45px;height:14px;background:#ece9d8;border:1px solid #b0ad9c;text-align:right;line-height:13px;padding-right:3px;white-space:nowrap">1000</div><div class="a" style="left:47px;top:46px;width:45px;height:14px;background:#9febed;text-align:right;padding-right:1px;line-height:15px">11.25</div><div class="a" style="left:93px;top:46px;width:45px;height:14px;background:#afd0d1;text-align:right;padding-right:1px;line-height:15px">27.75</div><div class="a" style="left:139px;top:46px;width:45px;height:14px;background:#afd0d1;text-align:right;padding-right:1px;line-height:15px">27.75</div><div class="a" style="left:185px;top:46px;width:45px;height:14px;background:#aed2d4;text-align:right;padding-right:1px;line-height:15px">26.25</div><div class="a" style="left:231px;top:46px;width:45px;height:14px;background:#acd5d7;text-align:right;padding-right:1px;line-height:15px">24.75</div><div class="a" style="left:277px;top:46px;width:45px;height:14px;background:#a5e0e2;text-align:right;padding-right:1px;line-height:15px">18.00</div><div class="a" style="left:323px;top:46px;width:45px;height:14px;background:#a2e5e7;text-align:right;padding-right:1px;line-height:15px">15.00</div><div class="a" style="left:369px;top:46px;width:45px;height:14px;background:#9eecef;text-align:right;padding-right:1px;line-height:15px">10.50</div><div class="a" style="left:415px;top:46px;width:45px;height:14px;background:#9deef0;text-align:right;padding-right:1px;line-height:15px">9.75</div><div class="a" style="left:461px;top:46px;width:45px;height:14px;background:#9deef0;text-align:right;padding-right:1px;line-height:15px">9.75</div><div class="a" style="left:507px;top:46px;width:45px;height:14px;background:#9deff1;text-align:right;padding-right:1px;line-height:15px">9.00</div><div class="a" style="left:553px;top:46px;width:45px;height:14px;background:#9deff1;text-align:right;padding-right:1px;line-height:15px">9.00</div><div class="a" style="left:599px;top:46px;width:45px;height:14px;background:#9deff1;text-align:right;padding-right:1px;line-height:15px">9.00</div><div class="a" style="left:645px;top:46px;width:45px;height:14px;background:#9deff1;text-align:right;padding-right:1px;line-height:15px">9.00</div><div class="a" style="left:691px;top:46px;width:45px;height:14px;background:#9deff1;text-align:right;padding-right:1px;line-height:15px">9.00</div><div class="a" style="left:737px;top:46px;width:45px;height:14px;background:#9deff1;text-align:right;padding-right:1px;line-height:15px">9.00</div><div class="a" style="left:1px;top:61px;width:45px;height:14px;background:#ece9d8;border:1px solid #b0ad9c;text-align:right;line-height:13px;padding-right:3px;white-space:nowrap">1240</div><div class="a" style="left:47px;top:61px;width:45px;height:14px;background:#9febed;text-align:right;padding-right:1px;line-height:15px">11.25</div><div class="a" style="left:93px;top:61px;width:45px;height:14px;background:#afd0d1;text-align:right;padding-right:1px;line-height:15px">27.75</div><div class="a" style="left:139px;top:61px;width:45px;height:14px;background:#afd0d1;text-align:right;padding-right:1px;line-height:15px">27.75</div><div class="a" style="left:185px;top:61px;width:45px;height:14px;background:#aed2d4;text-align:right;padding-right:1px;line-height:15px">26.25</div><div class="a" style="left:231px;top:61px;width:45px;height:14px;background:#add3d5;text-align:right;padding-right:1px;line-height:15px">25.50</div><div class="a" style="left:277px;top:61px;width:45px;height:14px;background:#a8dbdd;text-align:right;padding-right:1px;line-height:15px">21.00</div><div class="a" style="left:323px;top:61px;width:45px;height:14px;background:#a5e0e2;text-align:right;padding-right:1px;line-height:15px">18.00</div><div class="a" style="left:369px;top:61px;width:45px;height:14px;background:#a1e7ea;text-align:right;padding-right:1px;line-height:15px">13.50</div><div class="a" style="left:415px;top:61px;width:45px;height:14px;background:#9feaec;text-align:right;padding-right:1px;line-height:15px">12.00</div><div class="a" style="left:461px;top:61px;width:45px;height:14px;background:#9febed;text-align:right;padding-right:1px;line-height:15px">11.25</div><div class="a" style="left:507px;top:61px;width:45px;height:14px;background:#9deef0;text-align:right;padding-right:1px;line-height:15px">9.75</div><div class="a" style="left:553px;top:61px;width:45px;height:14px;background:#9deff1;text-align:right;padding-right:1px;line-height:15px">9.00</div><div class="a" style="left:599px;top:61px;width:45px;height:14px;background:#9deff1;text-align:right;padding-right:1px;line-height:15px">9.00</div><div class="a" style="left:645px;top:61px;width:45px;height:14px;background:#9deff1;text-align:right;padding-right:1px;line-height:15px">9.00</div><div class="a" style="left:691px;top:61px;width:45px;height:14px;background:#9deff1;text-align:right;padding-right:1px;line-height:15px">9.00</div><div class="a" style="left:737px;top:61px;width:45px;height:14px;background:#9deff1;text-align:right;padding-right:1px;line-height:15px">9.00</div><div class="a" style="left:1px;top:76px;width:45px;height:14px;background:#ece9d8;border:1px solid #b0ad9c;text-align:right;line-height:13px;padding-right:3px;white-space:nowrap">1520</div><div class="a" style="left:47px;top:76px;width:45px;height:14px;background:#a3e4e6;text-align:right;padding-right:1px;line-height:15px">15.75</div><div class="a" style="left:93px;top:76px;width:45px;height:14px;background:#aed1d3;text-align:right;padding-right:1px;line-height:15px">27.00</div><div class="a" style="left:139px;top:76px;width:45px;height:14px;background:#aed1d3;text-align:right;padding-right:1px;line-height:15px">27.00</div><div class="a" style="left:185px;top:76px;width:45px;height:14px;background:#aed1d3;text-align:right;padding-right:1px;line-height:15px">27.00</div><div class="a" style="left:231px;top:76px;width:45px;height:14px;background:#aed2d4;text-align:right;padding-right:1px;line-height:15px">26.25</div><div class="a" style="left:277px;top:76px;width:45px;height:14px;background:#add3d5;text-align:right;padding-right:1px;line-height:15px">25.50</div><div class="a" style="left:323px;top:76px;width:45px;height:14px;background:#a8dbdd;text-align:right;padding-right:1px;line-height:15px">21.00</div><div class="a" style="left:369px;top:76px;width:45px;height:14px;background:#a3e4e6;text-align:right;padding-right:1px;line-height:15px">15.75</div><div class="a" style="left:415px;top:76px;width:45px;height:14px;background:#a1e7ea;text-align:right;padding-right:1px;line-height:15px">13.50</div><div class="a" style="left:461px;top:76px;width:45px;height:14px;background:#9feaec;text-align:right;padding-right:1px;line-height:15px">12.00</div><div class="a" style="left:507px;top:76px;width:45px;height:14px;background:#9eecef;text-align:right;padding-right:1px;line-height:15px">10.50</div><div class="a" style="left:553px;top:76px;width:45px;height:14px;background:#9deff1;text-align:right;padding-right:1px;line-height:15px">9.00</div><div class="a" style="left:599px;top:76px;width:45px;height:14px;background:#9deff1;text-align:right;padding-right:1px;line-height:15px">9.00</div><div class="a" style="left:645px;top:76px;width:45px;height:14px;background:#9deff1;text-align:right;padding-right:1px;line-height:15px">9.00</div><div class="a" style="left:691px;top:76px;width:45px;height:14px;background:#9deff1;text-align:right;padding-right:1px;line-height:15px">9.00</div><div class="a" style="left:737px;top:76px;width:45px;height:14px;background:#9deff1;text-align:right;padding-right:1px;line-height:15px">9.00</div><div class="a" style="left:1px;top:91px;width:45px;height:14px;background:#ece9d8;border:1px solid #b0ad9c;text-align:right;line-height:13px;padding-right:3px;white-space:nowrap">1760</div><div class="a" style="left:47px;top:91px;width:45px;height:14px;background:#a6dfe1;text-align:right;padding-right:1px;line-height:15px">18.75</div><div class="a" style="left:93px;top:91px;width:45px;height:14px;background:#aed1d3;text-align:right;padding-right:1px;line-height:15px">27.00</div><div class="a" style="left:139px;top:91px;width:45px;height:14px;background:#aed1d3;text-align:right;padding-right:1px;line-height:15px">27.00</div><div class="a" style="left:185px;top:91px;width:45px;height:14px;background:#aed1d3;text-align:right;padding-right:1px;line-height:15px">27.00</div><div class="a" style="left:231px;top:91px;width:45px;height:14px;background:#aed1d3;text-align:right;padding-right:1px;line-height:15px">27.00</div><div class="a" style="left:277px;top:91px;width:45px;height:14px;background:#aed2d4;text-align:right;padding-right:1px;line-height:15px">26.25</div><div class="a" style="left:323px;top:91px;width:45px;height:14px;background:#aad7d9;text-align:right;padding-right:1px;line-height:15px">23.25</div><div class="a" style="left:369px;top:91px;width:45px;height:14px;background:#a5e0e2;text-align:right;padding-right:1px;line-height:15px">18.00</div><div class="a" style="left:415px;top:91px;width:45px;height:14px;background:#a1e6e8;text-align:right;padding-right:1px;line-height:15px">14.25</div><div class="a" style="left:461px;top:91px;width:45px;height:14px;background:#9feaec;text-align:right;padding-right:1px;line-height:15px">12.00</div><div class="a" style="left:507px;top:91px;width:45px;height:14px;background:#9eecef;text-align:right;padding-right:1px;line-height:15px">10.50</div><div class="a" style="left:553px;top:91px;width:45px;height:14px;background:#9deff1;text-align:right;padding-right:1px;line-height:15px">9.00</div><div class="a" style="left:599px;top:91px;width:45px;height:14px;background:#9cf0f2;text-align:right;padding-right:1px;line-height:15px">8.25</div><div class="a" style="left:645px;top:91px;width:45px;height:14px;background:#9cf0f2;text-align:right;padding-right:1px;line-height:15px">8.25</div><div class="a" style="left:691px;top:91px;width:45px;height:14px;background:#9cf0f2;text-align:right;padding-right:1px;line-height:15px">8.25</div><div class="a" style="left:737px;top:91px;width:45px;height:14px;background:#9cf0f2;text-align:right;padding-right:1px;line-height:15px">8.25</div><div class="a" style="left:1px;top:106px;width:45px;height:14px;background:#ece9d8;border:1px solid #b0ad9c;text-align:right;line-height:13px;padding-right:3px;white-space:nowrap">2000</div><div class="a" style="left:47px;top:106px;width:45px;height:14px;background:#aed2d4;text-align:right;padding-right:1px;line-height:15px">26.25</div><div class="a" style="left:93px;top:106px;width:45px;height:14px;background:#b1cdcf;text-align:right;padding-right:1px;line-height:15px">29.25</div><div class="a" style="left:139px;top:106px;width:45px;height:14px;background:#b1cdcf;text-align:right;padding-right:1px;line-height:15px">29.25</div><div class="a" style="left:185px;top:106px;width:45px;height:14px;background:#b1cdcf;text-align:right;padding-right:1px;line-height:15px">29.25</div><div class="a" style="left:231px;top:106px;width:45px;height:14px;background:#b1cdcf;text-align:right;padding-right:1px;line-height:15px">29.25</div><div class="a" style="left:277px;top:106px;width:45px;height:14px;background:#afd0d1;text-align:right;padding-right:1px;line-height:15px">27.75</div><div class="a" style="left:323px;top:106px;width:45px;height:14px;background:#add3d5;text-align:right;padding-right:1px;line-height:15px">25.50</div><div class="a" style="left:369px;top:106px;width:45px;height:14px;background:#a8dbdd;text-align:right;padding-right:1px;line-height:15px">21.00</div><div class="a" style="left:415px;top:106px;width:45px;height:14px;background:#a5e0e2;text-align:right;padding-right:1px;line-height:15px">18.00</div><div class="a" style="left:461px;top:106px;width:45px;height:14px;background:#a2e5e7;text-align:right;padding-right:1px;line-height:15px">15.00</div><div class="a" style="left:507px;top:106px;width:45px;height:14px;background:#9feaec;text-align:right;padding-right:1px;line-height:15px">12.00</div><div class="a" style="left:553px;top:106px;width:45px;height:14px;background:#9eecef;text-align:right;padding-right:1px;line-height:15px">10.50</div><div class="a" style="left:599px;top:106px;width:45px;height:14px;background:#9cf0f2;text-align:right;padding-right:1px;line-height:15px">8.25</div><div class="a" style="left:645px;top:106px;width:45px;height:14px;background:#9cf0f2;text-align:right;padding-right:1px;line-height:15px">8.25</div><div class="a" style="left:691px;top:106px;width:45px;height:14px;background:#9cf1f3;text-align:right;padding-right:1px;line-height:15px">7.50</div><div class="a" style="left:737px;top:106px;width:45px;height:14px;background:#9cf1f3;text-align:right;padding-right:1px;line-height:15px">7.50</div><div class="a" style="left:1px;top:121px;width:45px;height:14px;background:#ece9d8;border:1px solid #b0ad9c;text-align:right;line-height:13px;padding-right:3px;white-space:nowrap">2520</div><div class="a" style="left:47px;top:121px;width:45px;height:14px;background:#b1cdcf;text-align:right;padding-right:1px;line-height:15px">29.25</div><div class="a" style="left:93px;top:121px;width:45px;height:14px;background:#b1cdcf;text-align:right;padding-right:1px;line-height:15px">29.25</div><div class="a" style="left:139px;top:121px;width:45px;height:14px;background:#b1cdcf;text-align:right;padding-right:1px;line-height:15px">29.25</div><div class="a" style="left:185px;top:121px;width:45px;height:14px;background:#b1cdcf;text-align:right;padding-right:1px;line-height:15px">29.25</div><div class="a" style="left:231px;top:121px;width:45px;height:14px;background:#b3cacc;text-align:right;padding-right:1px;line-height:15px">30.75</div><div class="a" style="left:277px;top:121px;width:45px;height:14px;background:#b2cccd;text-align:right;padding-right:1px;line-height:15px">30.00</div><div class="a" style="left:323px;top:121px;width:45px;height:14px;background:#b0ced0;text-align:right;padding-right:1px;line-height:15px">28.50</div><div class="a" style="left:369px;top:121px;width:45px;height:14px;background:#aed2d4;text-align:right;padding-right:1px;line-height:15px">26.25</div><div class="a" style="left:415px;top:121px;width:45px;height:14px;background:#aad7d9;text-align:right;padding-right:1px;line-height:15px">23.25</div><div class="a" style="left:461px;top:121px;width:45px;height:14px;background:#a6dfe1;text-align:right;padding-right:1px;line-height:15px">18.75</div><div class="a" style="left:507px;top:121px;width:45px;height:14px;background:#a2e5e7;text-align:right;padding-right:1px;line-height:15px">15.00</div><div class="a" style="left:553px;top:121px;width:45px;height:14px;background:#a0e9eb;text-align:right;padding-right:1px;line-height:15px">12.75</div><div class="a" style="left:599px;top:121px;width:45px;height:14px;background:#9eecef;text-align:right;padding-right:1px;line-height:15px">10.50</div><div class="a" style="left:645px;top:121px;width:45px;height:14px;background:#9deef0;text-align:right;padding-right:1px;line-height:15px">9.75</div><div class="a" style="left:691px;top:121px;width:45px;height:14px;background:#9cf0f2;text-align:right;padding-right:1px;line-height:15px">8.25</div><div class="a" style="left:737px;top:121px;width:45px;height:14px;background:#9cf0f2;text-align:right;padding-right:1px;line-height:15px">8.25</div><div class="a" style="left:1px;top:136px;width:45px;height:14px;background:#ece9d8;border:1px solid #b0ad9c;text-align:right;line-height:13px;padding-right:3px;white-space:nowrap">3000</div><div class="a" style="left:47px;top:136px;width:45px;height:14px;background:#bac2c3;text-align:right;padding-right:1px;line-height:15px">36.00</div><div class="a" style="left:93px;top:136px;width:45px;height:14px;background:#b5c8ca;text-align:right;padding-right:1px;line-height:15px">32.25</div><div class="a" style="left:139px;top:136px;width:45px;height:14px;background:#b5c8ca;text-align:right;padding-right:1px;line-height:15px">32.25</div><div class="a" style="left:185px;top:136px;width:45px;height:14px;background:#b5c8ca;text-align:right;padding-right:1px;line-height:15px">32.25</div><div class="a" style="left:231px;top:136px;width:45px;height:14px;background:#b5c8ca;text-align:right;padding-right:1px;line-height:15px">32.25</div><div class="a" style="left:277px;top:136px;width:45px;height:14px;background:#b5c8ca;text-align:right;padding-right:1px;line-height:15px">32.25</div><div class="a" style="left:323px;top:136px;width:45px;height:14px;background:#b5c8ca;text-align:right;padding-right:1px;line-height:15px">32.25</div><div class="a" style="left:369px;top:136px;width:45px;height:14px;background:#b0ced0;text-align:right;padding-right:1px;line-height:15px">28.50</div><div class="a" style="left:415px;top:136px;width:45px;height:14px;background:#acd5d7;text-align:right;padding-right:1px;line-height:15px">24.75</div><div class="a" style="left:461px;top:136px;width:45px;height:14px;background:#a9dadc;text-align:right;padding-right:1px;line-height:15px">21.75</div><div class="a" style="left:507px;top:136px;width:45px;height:14px;background:#a6dfe1;text-align:right;padding-right:1px;line-height:15px">18.75</div><div class="a" style="left:553px;top:136px;width:45px;height:14px;background:#a3e4e6;text-align:right;padding-right:1px;line-height:15px">15.75</div><div class="a" style="left:599px;top:136px;width:45px;height:14px;background:#a1e6e8;text-align:right;padding-right:1px;line-height:15px">14.25</div><div class="a" style="left:645px;top:136px;width:45px;height:14px;background:#9febed;text-align:right;padding-right:1px;line-height:15px">11.25</div><div class="a" style="left:691px;top:136px;width:45px;height:14px;background:#9feaec;text-align:right;padding-right:1px;line-height:15px">12.00</div><div class="a" style="left:737px;top:136px;width:45px;height:14px;background:#9feaec;text-align:right;padding-right:1px;line-height:15px">12.00</div><div class="a" style="left:1px;top:151px;width:45px;height:14px;background:#ece9d8;border:1px solid #b0ad9c;text-align:right;line-height:13px;padding-right:3px;white-space:nowrap">3520</div><div class="a" style="left:47px;top:151px;width:45px;height:14px;background:#bebdbe;text-align:right;padding-right:1px;line-height:15px">39.00</div><div class="a" style="left:93px;top:151px;width:45px;height:14px;background:#b9c3c4;text-align:right;padding-right:1px;line-height:15px">35.25</div><div class="a" style="left:139px;top:151px;width:45px;height:14px;background:#b9c3c4;text-align:right;padding-right:1px;line-height:15px">35.25</div><div class="a" style="left:185px;top:151px;width:45px;height:14px;background:#b9c3c4;text-align:right;padding-right:1px;line-height:15px">35.25</div><div class="a" style="left:231px;top:151px;width:45px;height:14px;background:#b9c3c4;text-align:right;padding-right:1px;line-height:15px">35.25</div><div class="a" style="left:277px;top:151px;width:45px;height:14px;background:#b9c3c4;text-align:right;padding-right:1px;line-height:15px">35.25</div><div class="a" style="left:323px;top:151px;width:45px;height:14px;background:#b8c4c6;text-align:right;padding-right:1px;line-height:15px">34.50</div><div class="a" style="left:369px;top:151px;width:45px;height:14px;background:#b3cacc;text-align:right;padding-right:1px;line-height:15px">30.75</div><div class="a" style="left:415px;top:151px;width:45px;height:14px;background:#acd5d7;text-align:right;padding-right:1px;line-height:15px">24.75</div><div class="a" style="left:461px;top:151px;width:45px;height:14px;background:#a8dbdd;text-align:right;padding-right:1px;line-height:15px">21.00</div><div class="a" style="left:507px;top:151px;width:45px;height:14px;background:#a6dfe1;text-align:right;padding-right:1px;line-height:15px">18.75</div><div class="a" style="left:553px;top:151px;width:45px;height:14px;background:#a5e0e2;text-align:right;padding-right:1px;line-height:15px">18.00</div><div class="a" style="left:599px;top:151px;width:45px;height:14px;background:#a1e6e8;text-align:right;padding-right:1px;line-height:15px">14.25</div><div class="a" style="left:645px;top:151px;width:45px;height:14px;background:#a0e9eb;text-align:right;padding-right:1px;line-height:15px">12.75</div><div class="a" style="left:691px;top:151px;width:45px;height:14px;background:#9feaec;text-align:right;padding-right:1px;line-height:15px">12.00</div><div class="a" style="left:737px;top:151px;width:45px;height:14px;background:#9feaec;text-align:right;padding-right:1px;line-height:15px">12.00</div><div class="a" style="left:1px;top:166px;width:45px;height:14px;background:#ece9d8;border:1px solid #b0ad9c;text-align:right;line-height:13px;padding-right:3px;white-space:nowrap">4000</div><div class="a" style="left:47px;top:166px;width:45px;height:14px;background:#bfbbbc;text-align:right;padding-right:1px;line-height:15px">39.75</div><div class="a" style="left:93px;top:166px;width:45px;height:14px;background:#bfbbbc;text-align:right;padding-right:1px;line-height:15px">39.75</div><div class="a" style="left:139px;top:166px;width:45px;height:14px;background:#bfbbbc;text-align:right;padding-right:1px;line-height:15px">39.75</div><div class="a" style="left:185px;top:166px;width:45px;height:14px;background:#bdbebf;text-align:right;padding-right:1px;line-height:15px">38.25</div><div class="a" style="left:231px;top:166px;width:45px;height:14px;background:#bcbfc0;text-align:right;padding-right:1px;line-height:15px">37.50</div><div class="a" style="left:277px;top:166px;width:45px;height:14px;background:#b8c4c6;text-align:right;padding-right:1px;line-height:15px">34.50</div><div class="a" style="left:323px;top:166px;width:45px;height:14px;background:#b6c7c8;text-align:right;padding-right:1px;line-height:15px">33.00</div><div class="a" style="left:369px;top:166px;width:45px;height:14px;background:#b4c9cb;text-align:right;padding-right:1px;line-height:15px">31.50</div><div class="a" style="left:415px;top:166px;width:45px;height:14px;background:#afd0d1;text-align:right;padding-right:1px;line-height:15px">27.75</div><div class="a" style="left:461px;top:166px;width:45px;height:14px;background:#acd5d7;text-align:right;padding-right:1px;line-height:15px">24.75</div><div class="a" style="left:507px;top:166px;width:45px;height:14px;background:#a8dbdd;text-align:right;padding-right:1px;line-height:15px">21.00</div><div class="a" style="left:553px;top:166px;width:45px;height:14px;background:#a6dfe1;text-align:right;padding-right:1px;line-height:15px">18.75</div><div class="a" style="left:599px;top:166px;width:45px;height:14px;background:#a4e1e3;text-align:right;padding-right:1px;line-height:15px">17.25</div><div class="a" style="left:645px;top:166px;width:45px;height:14px;background:#a1e6e8;text-align:right;padding-right:1px;line-height:15px">14.25</div><div class="a" style="left:691px;top:166px;width:45px;height:14px;background:#a1e6e8;text-align:right;padding-right:1px;line-height:15px">14.25</div><div class="a" style="left:737px;top:166px;width:45px;height:14px;background:#a1e6e8;text-align:right;padding-right:1px;line-height:15px">14.25</div><div class="a" style="left:1px;top:181px;width:45px;height:14px;background:#ece9d8;border:1px solid #b0ad9c;text-align:right;line-height:13px;padding-right:3px;white-space:nowrap">4600</div><div class="a" style="left:47px;top:181px;width:45px;height:14px;background:#bfbbbc;text-align:right;padding-right:1px;line-height:15px">39.75</div><div class="a" style="left:93px;top:181px;width:45px;height:14px;background:#bfbbbc;text-align:right;padding-right:1px;line-height:15px">39.75</div><div class="a" style="left:139px;top:181px;width:45px;height:14px;background:#bfbbbc;text-align:right;padding-right:1px;line-height:15px">39.75</div><div class="a" style="left:185px;top:181px;width:45px;height:14px;background:#bfbbbc;text-align:right;padding-right:1px;line-height:15px">39.75</div><div class="a" style="left:231px;top:181px;width:45px;height:14px;background:#bdbebf;text-align:right;padding-right:1px;line-height:15px">38.25</div><div class="a" style="left:277px;top:181px;width:45px;height:14px;background:#bac2c3;text-align:right;padding-right:1px;line-height:15px">36.00</div><div class="a" style="left:323px;top:181px;width:45px;height:14px;background:#b6c7c8;text-align:right;padding-right:1px;line-height:15px">33.00</div><div class="a" style="left:369px;top:181px;width:45px;height:14px;background:#afd0d1;text-align:right;padding-right:1px;line-height:15px">27.75</div><div class="a" style="left:415px;top:181px;width:45px;height:14px;background:#add3d5;text-align:right;padding-right:1px;line-height:15px">25.50</div><div class="a" style="left:461px;top:181px;width:45px;height:14px;background:#aad7d9;text-align:right;padding-right:1px;line-height:15px">23.25</div><div class="a" style="left:507px;top:181px;width:45px;height:14px;background:#a9d8da;text-align:right;padding-right:1px;line-height:15px">22.50</div><div class="a" style="left:553px;top:181px;width:45px;height:14px;background:#a7dcde;text-align:right;padding-right:1px;line-height:15px">20.25</div><div class="a" style="left:599px;top:181px;width:45px;height:14px;background:#a6dfe1;text-align:right;padding-right:1px;line-height:15px">18.75</div><div class="a" style="left:645px;top:181px;width:45px;height:14px;background:#a3e4e6;text-align:right;padding-right:1px;line-height:15px">15.75</div><div class="a" style="left:691px;top:181px;width:45px;height:14px;background:#a3e4e6;text-align:right;padding-right:1px;line-height:15px">15.75</div><div class="a" style="left:737px;top:181px;width:45px;height:14px;background:#a1e6e8;text-align:right;padding-right:1px;line-height:15px">14.25</div><div class="a" style="left:1px;top:196px;width:45px;height:14px;background:#ece9d8;border:1px solid #b0ad9c;text-align:right;line-height:13px;padding-right:3px;white-space:nowrap">5200</div><div class="a" style="left:47px;top:196px;width:45px;height:14px;background:#bfbbbc;text-align:right;padding-right:1px;line-height:15px">39.75</div><div class="a" style="left:93px;top:196px;width:45px;height:14px;background:#bfbbbc;text-align:right;padding-right:1px;line-height:15px">39.75</div><div class="a" style="left:139px;top:196px;width:45px;height:14px;background:#bfbbbc;text-align:right;padding-right:1px;line-height:15px">39.75</div><div class="a" style="left:185px;top:196px;width:45px;height:14px;background:#bfbbbc;text-align:right;padding-right:1px;line-height:15px">39.75</div><div class="a" style="left:231px;top:196px;width:45px;height:14px;background:#bdbebf;text-align:right;padding-right:1px;line-height:15px">38.25</div><div class="a" style="left:277px;top:196px;width:45px;height:14px;background:#b9c3c4;text-align:right;padding-right:1px;line-height:15px">35.25</div><div class="a" style="left:323px;top:196px;width:45px;height:14px;background:#b3cacc;text-align:right;padding-right:1px;line-height:15px">30.75</div><div class="a" style="left:369px;top:196px;width:45px;height:14px;background:#b1cdcf;text-align:right;padding-right:1px;line-height:15px">29.25</div><div class="a" style="left:415px;top:196px;width:45px;height:14px;background:#acd5d7;text-align:right;padding-right:1px;line-height:15px">24.75</div><div class="a" style="left:461px;top:196px;width:45px;height:14px;background:#aad7d9;text-align:right;padding-right:1px;line-height:15px">23.25</div><div class="a" style="left:507px;top:196px;width:45px;height:14px;background:#a9dadc;text-align:right;padding-right:1px;line-height:15px">21.75</div><div class="a" style="left:553px;top:196px;width:45px;height:14px;background:#a6dddf;text-align:right;padding-right:1px;line-height:15px">19.50</div><div class="a" style="left:599px;top:196px;width:45px;height:14px;background:#a5e0e2;text-align:right;padding-right:1px;line-height:15px">18.00</div><div class="a" style="left:645px;top:196px;width:45px;height:14px;background:#a3e2e5;text-align:right;padding-right:1px;line-height:15px">16.50</div><div class="a" style="left:691px;top:196px;width:45px;height:14px;background:#a3e2e5;text-align:right;padding-right:1px;line-height:15px">16.50</div><div class="a" style="left:737px;top:196px;width:45px;height:14px;background:#a4e1e3;text-align:right;padding-right:1px;line-height:15px">17.25</div><div class="a" style="left:1px;top:211px;width:45px;height:14px;background:#ece9d8;border:1px solid #b0ad9c;text-align:right;line-height:13px;padding-right:3px;white-space:nowrap">5720</div><div class="a" style="left:47px;top:211px;width:45px;height:14px;background:#bfbbbc;text-align:right;padding-right:1px;line-height:15px">39.75</div><div class="a" style="left:93px;top:211px;width:45px;height:14px;background:#bfbbbc;text-align:right;padding-right:1px;line-height:15px">39.75</div><div class="a" style="left:139px;top:211px;width:45px;height:14px;background:#bdbebf;text-align:right;padding-right:1px;line-height:15px">38.25</div><div class="a" style="left:185px;top:211px;width:45px;height:14px;background:#bdbebf;text-align:right;padding-right:1px;line-height:15px">38.25</div><div class="a" style="left:231px;top:211px;width:45px;height:14px;background:#bdbebf;text-align:right;padding-right:1px;line-height:15px">38.25</div><div class="a" style="left:277px;top:211px;width:45px;height:14px;background:#bdbebf;text-align:right;padding-right:1px;line-height:15px">38.25</div><div class="a" style="left:323px;top:211px;width:45px;height:14px;background:#b8c4c6;text-align:right;padding-right:1px;line-height:15px">34.50</div><div class="a" style="left:369px;top:211px;width:45px;height:14px;background:#b1cdcf;text-align:right;padding-right:1px;line-height:15px">29.25</div><div class="a" style="left:415px;top:211px;width:45px;height:14px;background:#acd5d7;text-align:right;padding-right:1px;line-height:15px">24.75</div><div class="a" style="left:461px;top:211px;width:45px;height:14px;background:#a9d8da;text-align:right;padding-right:1px;line-height:15px">22.50</div><div class="a" style="left:507px;top:211px;width:45px;height:14px;background:#a9d8da;text-align:right;padding-right:1px;line-height:15px">22.50</div><div class="a" style="left:553px;top:211px;width:45px;height:14px;background:#a8dbdd;text-align:right;padding-right:1px;line-height:15px">21.00</div><div class="a" style="left:599px;top:211px;width:45px;height:14px;background:#a6dddf;text-align:right;padding-right:1px;line-height:15px">19.50</div><div class="a" style="left:645px;top:211px;width:45px;height:14px;background:#a4e1e3;text-align:right;padding-right:1px;line-height:15px">17.25</div><div class="a" style="left:691px;top:211px;width:45px;height:14px;background:#a5e0e2;text-align:right;padding-right:1px;line-height:15px">18.00</div><div class="a" style="left:737px;top:211px;width:45px;height:14px;background:#a5e0e2;text-align:right;padding-right:1px;line-height:15px">18.00</div><div class="a" style="left:1px;top:226px;width:45px;height:14px;background:#ece9d8;border:1px solid #b0ad9c;text-align:right;line-height:13px;padding-right:3px;white-space:nowrap">6000</div><div class="a" style="left:47px;top:226px;width:45px;height:14px;background:#bfbbbc;text-align:right;padding-right:1px;line-height:15px">39.75</div><div class="a" style="left:93px;top:226px;width:45px;height:14px;background:#bfbbbc;text-align:right;padding-right:1px;line-height:15px">39.75</div><div class="a" style="left:139px;top:226px;width:45px;height:14px;background:#bcbfc0;text-align:right;padding-right:1px;line-height:15px">37.50</div><div class="a" style="left:185px;top:226px;width:45px;height:14px;background:#bcbfc0;text-align:right;padding-right:1px;line-height:15px">37.50</div><div class="a" style="left:231px;top:226px;width:45px;height:14px;background:#bcbfc0;text-align:right;padding-right:1px;line-height:15px">37.50</div><div class="a" style="left:277px;top:226px;width:45px;height:14px;background:#bcbfc0;text-align:right;padding-right:1px;line-height:15px">37.50</div><div class="a" style="left:323px;top:226px;width:45px;height:14px;background:#b9c3c4;text-align:right;padding-right:1px;line-height:15px">35.25</div><div class="a" style="left:369px;top:226px;width:45px;height:14px;background:#b2cccd;text-align:right;padding-right:1px;line-height:15px">30.00</div><div class="a" style="left:415px;top:226px;width:45px;height:14px;background:#afd0d1;text-align:right;padding-right:1px;line-height:15px">27.75</div><div class="a" style="left:461px;top:226px;width:45px;height:14px;background:#add3d5;text-align:right;padding-right:1px;line-height:15px">25.50</div><div class="a" style="left:507px;top:226px;width:45px;height:14px;background:#abd6d8;text-align:right;padding-right:1px;line-height:15px">24.00</div><div class="a" style="left:553px;top:226px;width:45px;height:14px;background:#a9dadc;text-align:right;padding-right:1px;line-height:15px">21.75</div><div class="a" style="left:599px;top:226px;width:45px;height:14px;background:#a8dbdd;text-align:right;padding-right:1px;line-height:15px">21.00</div><div class="a" style="left:645px;top:226px;width:45px;height:14px;background:#a7dcde;text-align:right;padding-right:1px;line-height:15px">20.25</div><div class="a" style="left:691px;top:226px;width:45px;height:14px;background:#a7dcde;text-align:right;padding-right:1px;line-height:15px">20.25</div><div class="a" style="left:737px;top:226px;width:45px;height:14px;background:#a7dcde;text-align:right;padding-right:1px;line-height:15px">20.25</div><div class="a" style="left:1px;top:241px;width:45px;height:14px;background:#ece9d8;border:1px solid #b0ad9c;text-align:right;line-height:13px;padding-right:3px;white-space:nowrap">6520</div><div class="a" style="left:47px;top:241px;width:45px;height:14px;background:#bfbbbc;text-align:right;padding-right:1px;line-height:15px">39.75</div><div class="a" style="left:93px;top:241px;width:45px;height:14px;background:#bfbbbc;text-align:right;padding-right:1px;line-height:15px">39.75</div><div class="a" style="left:139px;top:241px;width:45px;height:14px;background:#bcbfc0;text-align:right;padding-right:1px;line-height:15px">37.50</div><div class="a" style="left:185px;top:241px;width:45px;height:14px;background:#bcbfc0;text-align:right;padding-right:1px;line-height:15px">37.50</div><div class="a" style="left:231px;top:241px;width:45px;height:14px;background:#bcbfc0;text-align:right;padding-right:1px;line-height:15px">37.50</div><div class="a" style="left:277px;top:241px;width:45px;height:14px;background:#bcbfc0;text-align:right;padding-right:1px;line-height:15px">37.50</div><div class="a" style="left:323px;top:241px;width:45px;height:14px;background:#b8c4c6;text-align:right;padding-right:1px;line-height:15px">34.50</div><div class="a" style="left:369px;top:241px;width:45px;height:14px;background:#b6c7c8;text-align:right;padding-right:1px;line-height:15px">33.00</div><div class="a" style="left:415px;top:241px;width:45px;height:14px;background:#aed1d3;text-align:right;padding-right:1px;line-height:15px">27.00</div><div class="a" style="left:461px;top:241px;width:45px;height:14px;background:#aed2d4;text-align:right;padding-right:1px;line-height:15px">26.25</div><div class="a" style="left:507px;top:241px;width:45px;height:14px;background:#abd6d8;text-align:right;padding-right:1px;line-height:15px">24.00</div><div class="a" style="left:553px;top:241px;width:45px;height:14px;background:#a9d8da;text-align:right;padding-right:1px;line-height:15px">22.50</div><div class="a" style="left:599px;top:241px;width:45px;height:14px;background:#a8dbdd;text-align:right;padding-right:1px;line-height:15px">21.00</div><div class="a" style="left:645px;top:241px;width:45px;height:14px;background:#a8dbdd;text-align:right;padding-right:1px;line-height:15px">21.00</div><div class="a" style="left:691px;top:241px;width:45px;height:14px;background:#a8dbdd;text-align:right;padding-right:1px;line-height:15px">21.00</div><div class="a" style="left:737px;top:241px;width:45px;height:14px;background:#a6dddf;text-align:right;padding-right:1px;line-height:15px">19.50</div><div class="a" style="left:1px;top:256px;width:45px;height:14px;background:#ece9d8;border:1px solid #b0ad9c;text-align:right;line-height:13px;padding-right:3px;white-space:nowrap">7000</div><div class="a" style="left:47px;top:256px;width:45px;height:14px;background:#bfbbbc;text-align:right;padding-right:1px;line-height:15px">39.75</div><div class="a" style="left:93px;top:256px;width:45px;height:14px;background:#bfbbbc;text-align:right;padding-right:1px;line-height:15px">39.75</div><div class="a" style="left:139px;top:256px;width:45px;height:14px;background:#bbc0c2;text-align:right;padding-right:1px;line-height:15px">36.75</div><div class="a" style="left:185px;top:256px;width:45px;height:14px;background:#bbc0c2;text-align:right;padding-right:1px;line-height:15px">36.75</div><div class="a" style="left:231px;top:256px;width:45px;height:14px;background:#bbc0c2;text-align:right;padding-right:1px;line-height:15px">36.75</div><div class="a" style="left:277px;top:256px;width:45px;height:14px;background:#bbc0c2;text-align:right;padding-right:1px;line-height:15px">36.75</div><div class="a" style="left:323px;top:256px;width:45px;height:14px;background:#b8c4c6;text-align:right;padding-right:1px;line-height:15px">34.50</div><div class="a" style="left:369px;top:256px;width:45px;height:14px;background:#b6c7c8;text-align:right;padding-right:1px;line-height:15px">33.00</div><div class="a" style="left:415px;top:256px;width:45px;height:14px;background:#b1cdcf;text-align:right;padding-right:1px;line-height:15px">29.25</div><div class="a" style="left:461px;top:256px;width:45px;height:14px;background:#afd0d1;text-align:right;padding-right:1px;line-height:15px">27.75</div><div class="a" style="left:507px;top:256px;width:45px;height:14px;background:#acd5d7;text-align:right;padding-right:1px;line-height:15px">24.75</div><div class="a" style="left:553px;top:256px;width:45px;height:14px;background:#abd6d8;text-align:right;padding-right:1px;line-height:15px">24.00</div><div class="a" style="left:599px;top:256px;width:45px;height:14px;background:#a9d8da;text-align:right;padding-right:1px;line-height:15px">22.50</div><div class="a" style="left:645px;top:256px;width:45px;height:14px;background:#a9d8da;text-align:right;padding-right:1px;line-height:15px">22.50</div><div class="a" style="left:691px;top:256px;width:45px;height:14px;background:#a9d8da;text-align:right;padding-right:1px;line-height:15px">22.50</div><div class="a" style="left:737px;top:256px;width:45px;height:14px;background:#98feff;text-align:right;padding-right:1px;line-height:15px">0.00</div></div><div class="a" style="left:0;top:329px;width:811px;height:23px;background:#ece9d8"></div><div class="a" style="left:73px;top:332px;width:1px;height:18px;background:#c8c5b5"></div><div class="a" style="left:74px;top:332px;width:1px;height:18px;background:#fff"></div><div class="a" style="left:148px;top:332px;width:1px;height:18px;background:#c8c5b5"></div><div class="a" style="left:149px;top:332px;width:1px;height:18px;background:#fff"></div><div class="a" style="left:153px;top:336px;white-space:nowrap;letter-spacing:0.08px">Sel Count: 1, Min: 12.000, Max: 12.000, Avg: 12.000</div><div class="a" style="left:807px;top:340px;width:2px;height:2px;background:#a8a598;box-shadow:1px 1px 0 #fff"></div><div class="a" style="left:803px;top:344px;width:2px;height:2px;background:#a8a598;box-shadow:1px 1px 0 #fff"></div><div class="a" style="left:807px;top:344px;width:2px;height:2px;background:#a8a598;box-shadow:1px 1px 0 #fff"></div><div class="a" style="left:799px;top:348px;width:2px;height:2px;background:#a8a598;box-shadow:1px 1px 0 #fff"></div><div class="a" style="left:803px;top:348px;width:2px;height:2px;background:#a8a598;box-shadow:1px 1px 0 #fff"></div><div class="a" style="left:807px;top:348px;width:2px;height:2px;background:#a8a598;box-shadow:1px 1px 0 #fff"></div></div></div><div id="statusbar" class="a"><span class="a" style="left:2px;top:6px;white-space:pre">16x16 Table, Offset: 9383,  Cell Size: 8 Bit</span></div><div id="taskbar" class="a"><div class="a" style="left:0;top:0;width:96px;height:30px;border-radius:0 7px 7px 0 / 0 15px 15px 0;background:linear-gradient(#3a8f3a 0px,#5cbc5c 2px,#46b046 6px,#38a438 16px,#34a034 24px,#2a842a 30px);box-shadow:inset -2px 0 3px rgba(0,40,0,0.35)"></div><svg class="a" style="left:10px;top:6px" width="20" height="18" viewBox="0 0 20 18"><path d="M3 2q3-2 7 0l-1.5 6q-3-2-7 0z" fill="#e8501c"/><path d="M11 1q3 2 8 0l-1.5 6q-4 2-8 0z" fill="#58b030"/><path d="M1.5 9q3-2 7 0l-1.5 6q-3-2-7 0z" fill="#3c80e8"/><path d="M9.5 9q3 2 8 0l-1.5 6q-4 2-8 0z" fill="#f0c010"/></svg><div class="a" style="left:35px;top:6px;color:#fff;font-size:16px;font-weight:bold;font-style:italic;text-shadow:1px 1px 1px #1a4a1a;letter-spacing:0.3px">пуск</div><div class="a" style="left:106px;top:4px;width:158px;height:24px;border-radius:3px;background:linear-gradient(#5a9cf8 0px,#3c84f0 3px,#3a82ee 12px,#3176e6 23px);border:1px solid #2a62d0"><svg class="a" style="left:8px;top:3px" width="17" height="17" viewBox="0 0 17 17"><circle cx="8.5" cy="8.5" r="7.5" fill="#cc1010"/><ellipse cx="8.5" cy="8.5" rx="3" ry="5.5" fill="#3a82ee"/><ellipse cx="8.5" cy="8.5" rx="2" ry="5" fill="#7a1010"/></svg><div class="a" style="left:28px;top:5px;color:#fff;white-space:nowrap">БЭУ INVENT - Opera</div></div><div class="a" style="left:266px;top:4px;width:158px;height:24px;border-radius:3px;background:linear-gradient(#5a9cf8 0px,#3c84f0 3px,#3a82ee 12px,#3176e6 23px);border:1px solid #2a62d0"><svg class="a" style="left:8px;top:3px" width="17" height="17" viewBox="0 0 17 17"><path d="M2 11l9-9 4 4-9 9z" fill="#e0a030" stroke="#5a3a10"/><path d="M4 11l7-7" stroke="#fff"/></svg><div class="a" style="left:28px;top:5px;color:#fff;white-space:nowrap">1370. Urban Assault ...</div></div><div class="a" style="left:426px;top:4px;width:156px;height:24px;border-radius:3px;background:linear-gradient(#5a9cf8 0px,#3c84f0 3px,#3a82ee 12px,#3176e6 23px);border:1px solid #2a62d0"><svg class="a" style="left:9px;top:4px" width="17" height="15" viewBox="0 0 17 15"><path d="M1 2h6l1 2h8v10H1z" fill="#f8d860" stroke="#b08820"/><path d="M1 6h15v8H1z" fill="#fce890"/></svg><div class="a" style="left:28px;top:5px;color:#fff;white-space:nowrap">СТР-3.21 FULL</div></div><div class="a" style="left:585px;top:4px;width:160px;height:24px;border-radius:3px;background:linear-gradient(#1e52c4 0px,#1c4fbe 50%,#1a4cb8 100%);border:1px solid #10328e"><svg class="a" style="left:9px;top:6px" width="17" height="12" viewBox="0 0 17 12"><rect x="0" y="2" width="17" height="8" fill="#0a0a0a"/><rect x="1.0" y="0" width="1.2" height="2" fill="#ccc"/><rect x="1.0" y="10" width="1.2" height="2" fill="#ccc"/><rect x="3.2" y="0" width="1.2" height="2" fill="#ccc"/><rect x="3.2" y="10" width="1.2" height="2" fill="#ccc"/><rect x="5.4" y="0" width="1.2" height="2" fill="#ccc"/><rect x="5.4" y="10" width="1.2" height="2" fill="#ccc"/><rect x="7.6" y="0" width="1.2" height="2" fill="#ccc"/><rect x="7.6" y="10" width="1.2" height="2" fill="#ccc"/><rect x="9.8" y="0" width="1.2" height="2" fill="#ccc"/><rect x="9.8" y="10" width="1.2" height="2" fill="#ccc"/><rect x="12.0" y="0" width="1.2" height="2" fill="#ccc"/><rect x="12.0" y="10" width="1.2" height="2" fill="#ccc"/><rect x="14.2" y="0" width="1.2" height="2" fill="#ccc"/><rect x="14.2" y="10" width="1.2" height="2" fill="#ccc"/></svg><div class="a" style="left:28px;top:5px;color:#fff;white-space:nowrap">TunerPro - -Fuel_Ign...</div></div><div class="a" style="left:1170px;top:9px;color:#fff">RU</div><div class="a" style="left:1204px;top:0;width:76px;height:30px;background:linear-gradient(#1c8ee8 0px,#12a0f0 3px,#0f96ec 15px,#0c86e0 30px);border-left:1px solid #1a60c8"></div><svg class="a" style="left:1196px;top:7px" width="18" height="18" viewBox="0 0 18 18"><circle cx="9" cy="9" r="8" fill="#3a8ee8" stroke="#e0f0ff"/><path d="M11 5l-4 4 4 4" stroke="#fff" stroke-width="2" fill="none"/></svg><svg class="a" style="left:1215px;top:7px" width="18" height="18" viewBox="0 0 18 18"><circle cx="9" cy="9" r="8" fill="#f0a020"/><circle cx="9" cy="9" r="4" fill="none" stroke="#fff" stroke-width="2"/><path d="M13 9v4" stroke="#fff" stroke-width="2"/></svg><div class="a" style="left:1240px;top:9px;color:#fff">7:39</div></div></body></html>
